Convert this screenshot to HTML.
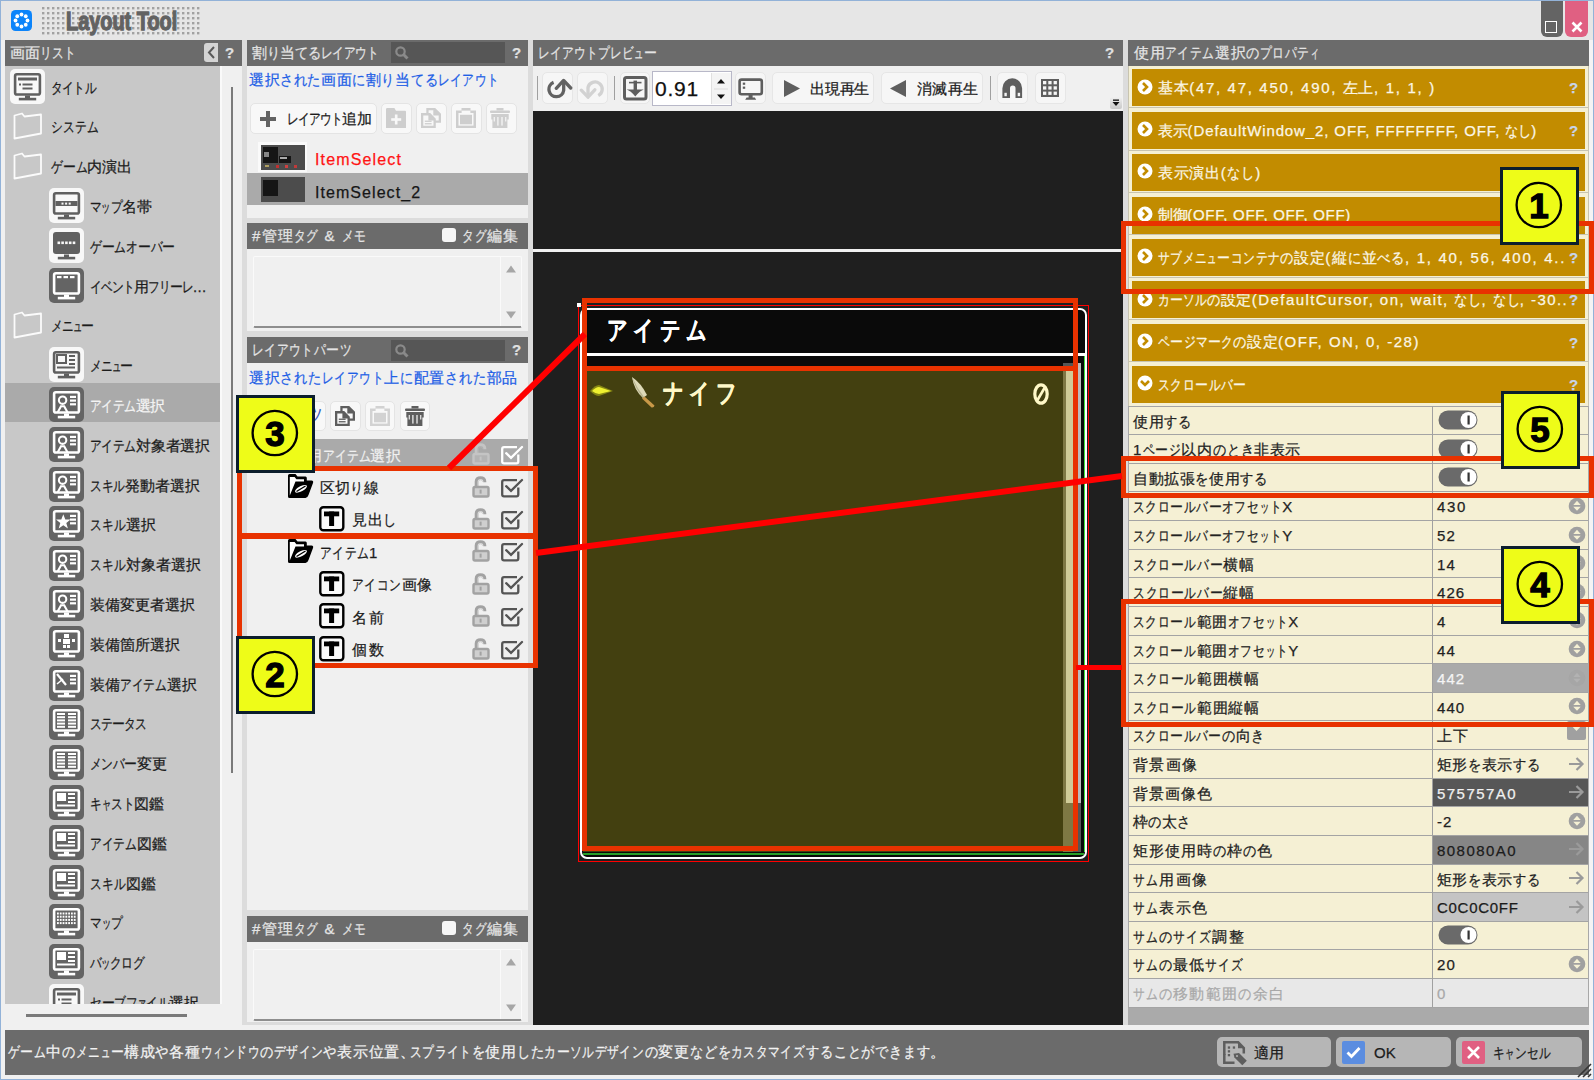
<!DOCTYPE html><html lang="ja"><head><meta charset="utf-8"><style>
html,body{margin:0;padding:0;} body{width:1594px;height:1080px;position:relative;overflow:hidden;background:#f0f0f0;font-family:'Liberation Sans', sans-serif;}
div{box-sizing:border-box;-webkit-text-stroke:0.25px currentColor;} svg{position:absolute;display:block;}
</style></head><body>
<div style="position:absolute;left:0px;top:0px;width:1594px;height:40px;background:#e6e6e6;"></div>
<div style="position:absolute;left:0px;top:0px;width:1594px;height:1px;background:#92b2d8;"></div>
<div style="position:absolute;left:0px;top:0px;width:1px;height:1080px;background:#92b2d8;"></div>
<div style="position:absolute;left:1593px;top:0px;width:1px;height:1080px;background:#92b2d8;"></div>
<div style="position:absolute;left:0px;top:1079px;width:1594px;height:1px;background:#92b2d8;"></div>
<svg style="left:11px;top:10px" width="21" height="21" viewBox="0 0 21 21"><rect x="0" y="0" width="21" height="21" rx="4.5" fill="#0c84fa"/><circle cx="16.5" cy="10.5" r="1.9" fill="#fff"/><circle cx="14.742641380355892" cy="14.742639993882566" r="1.9" fill="#fff"/><circle cx="10.50000196076938" cy="16.49999999999968" r="1.9" fill="#fff"/><circle cx="6.257361392591211" cy="14.74264276682876" r="1.9" fill="#fff"/><circle cx="4.500000000001282" cy="10.500003921538758" r="1.9" fill="#fff"/><circle cx="6.257355846698819" cy="6.257362779065442" r="1.9" fill="#fff"/><circle cx="10.499994117691864" cy="4.500000000002884" r="1.9" fill="#fff"/><circle cx="14.742635834459875" cy="6.257354460226856" r="1.9" fill="#fff"/></svg>
<svg style="left:42px;top:7.4px" width="160" height="30" viewBox="0 0 160 30"><rect x="0.0" y="0.0" width="2.4" height="2.4" fill="#a2a2a2"/><rect x="5.0" y="0.0" width="2.4" height="2.4" fill="#a2a2a2"/><rect x="10.0" y="0.0" width="2.4" height="2.4" fill="#a2a2a2"/><rect x="15.0" y="0.0" width="2.4" height="2.4" fill="#a2a2a2"/><rect x="20.0" y="0.0" width="2.4" height="2.4" fill="#a2a2a2"/><rect x="25.0" y="0.0" width="2.4" height="2.4" fill="#a2a2a2"/><rect x="30.0" y="0.0" width="2.4" height="2.4" fill="#a2a2a2"/><rect x="35.0" y="0.0" width="2.4" height="2.4" fill="#a2a2a2"/><rect x="40.0" y="0.0" width="2.4" height="2.4" fill="#a2a2a2"/><rect x="45.0" y="0.0" width="2.4" height="2.4" fill="#a2a2a2"/><rect x="50.0" y="0.0" width="2.4" height="2.4" fill="#a2a2a2"/><rect x="55.0" y="0.0" width="2.4" height="2.4" fill="#a2a2a2"/><rect x="60.0" y="0.0" width="2.4" height="2.4" fill="#a2a2a2"/><rect x="65.0" y="0.0" width="2.4" height="2.4" fill="#a2a2a2"/><rect x="70.0" y="0.0" width="2.4" height="2.4" fill="#a2a2a2"/><rect x="75.0" y="0.0" width="2.4" height="2.4" fill="#a2a2a2"/><rect x="80.0" y="0.0" width="2.4" height="2.4" fill="#a2a2a2"/><rect x="85.0" y="0.0" width="2.4" height="2.4" fill="#a2a2a2"/><rect x="90.0" y="0.0" width="2.4" height="2.4" fill="#a2a2a2"/><rect x="95.0" y="0.0" width="2.4" height="2.4" fill="#a2a2a2"/><rect x="100.0" y="0.0" width="2.4" height="2.4" fill="#a2a2a2"/><rect x="105.0" y="0.0" width="2.4" height="2.4" fill="#a2a2a2"/><rect x="110.0" y="0.0" width="2.4" height="2.4" fill="#a2a2a2"/><rect x="115.0" y="0.0" width="2.4" height="2.4" fill="#a2a2a2"/><rect x="120.0" y="0.0" width="2.4" height="2.4" fill="#a2a2a2"/><rect x="125.0" y="0.0" width="2.4" height="2.4" fill="#a2a2a2"/><rect x="130.0" y="0.0" width="2.4" height="2.4" fill="#a2a2a2"/><rect x="135.0" y="0.0" width="2.4" height="2.4" fill="#a2a2a2"/><rect x="140.0" y="0.0" width="2.4" height="2.4" fill="#a2a2a2"/><rect x="145.0" y="0.0" width="2.4" height="2.4" fill="#a2a2a2"/><rect x="150.0" y="0.0" width="2.4" height="2.4" fill="#a2a2a2"/><rect x="155.0" y="0.0" width="2.4" height="2.4" fill="#a2a2a2"/><rect x="0.0" y="5.0" width="2.4" height="2.4" fill="#a2a2a2"/><rect x="5.0" y="5.0" width="2.4" height="2.4" fill="#a2a2a2"/><rect x="10.0" y="5.0" width="2.4" height="2.4" fill="#a2a2a2"/><rect x="15.0" y="5.0" width="2.4" height="2.4" fill="#a2a2a2"/><rect x="20.0" y="5.0" width="2.4" height="2.4" fill="#a2a2a2"/><rect x="25.0" y="5.0" width="2.4" height="2.4" fill="#a2a2a2"/><rect x="30.0" y="5.0" width="2.4" height="2.4" fill="#a2a2a2"/><rect x="35.0" y="5.0" width="2.4" height="2.4" fill="#a2a2a2"/><rect x="40.0" y="5.0" width="2.4" height="2.4" fill="#a2a2a2"/><rect x="45.0" y="5.0" width="2.4" height="2.4" fill="#a2a2a2"/><rect x="50.0" y="5.0" width="2.4" height="2.4" fill="#a2a2a2"/><rect x="55.0" y="5.0" width="2.4" height="2.4" fill="#a2a2a2"/><rect x="60.0" y="5.0" width="2.4" height="2.4" fill="#a2a2a2"/><rect x="65.0" y="5.0" width="2.4" height="2.4" fill="#a2a2a2"/><rect x="70.0" y="5.0" width="2.4" height="2.4" fill="#a2a2a2"/><rect x="75.0" y="5.0" width="2.4" height="2.4" fill="#a2a2a2"/><rect x="80.0" y="5.0" width="2.4" height="2.4" fill="#a2a2a2"/><rect x="85.0" y="5.0" width="2.4" height="2.4" fill="#a2a2a2"/><rect x="90.0" y="5.0" width="2.4" height="2.4" fill="#a2a2a2"/><rect x="95.0" y="5.0" width="2.4" height="2.4" fill="#a2a2a2"/><rect x="100.0" y="5.0" width="2.4" height="2.4" fill="#a2a2a2"/><rect x="105.0" y="5.0" width="2.4" height="2.4" fill="#a2a2a2"/><rect x="110.0" y="5.0" width="2.4" height="2.4" fill="#a2a2a2"/><rect x="115.0" y="5.0" width="2.4" height="2.4" fill="#a2a2a2"/><rect x="120.0" y="5.0" width="2.4" height="2.4" fill="#a2a2a2"/><rect x="125.0" y="5.0" width="2.4" height="2.4" fill="#a2a2a2"/><rect x="130.0" y="5.0" width="2.4" height="2.4" fill="#a2a2a2"/><rect x="135.0" y="5.0" width="2.4" height="2.4" fill="#a2a2a2"/><rect x="140.0" y="5.0" width="2.4" height="2.4" fill="#a2a2a2"/><rect x="145.0" y="5.0" width="2.4" height="2.4" fill="#a2a2a2"/><rect x="150.0" y="5.0" width="2.4" height="2.4" fill="#a2a2a2"/><rect x="155.0" y="5.0" width="2.4" height="2.4" fill="#a2a2a2"/><rect x="0.0" y="10.0" width="2.4" height="2.4" fill="#a2a2a2"/><rect x="5.0" y="10.0" width="2.4" height="2.4" fill="#a2a2a2"/><rect x="10.0" y="10.0" width="2.4" height="2.4" fill="#a2a2a2"/><rect x="15.0" y="10.0" width="2.4" height="2.4" fill="#a2a2a2"/><rect x="20.0" y="10.0" width="2.4" height="2.4" fill="#a2a2a2"/><rect x="25.0" y="10.0" width="2.4" height="2.4" fill="#a2a2a2"/><rect x="30.0" y="10.0" width="2.4" height="2.4" fill="#a2a2a2"/><rect x="35.0" y="10.0" width="2.4" height="2.4" fill="#a2a2a2"/><rect x="40.0" y="10.0" width="2.4" height="2.4" fill="#a2a2a2"/><rect x="45.0" y="10.0" width="2.4" height="2.4" fill="#a2a2a2"/><rect x="50.0" y="10.0" width="2.4" height="2.4" fill="#a2a2a2"/><rect x="55.0" y="10.0" width="2.4" height="2.4" fill="#a2a2a2"/><rect x="60.0" y="10.0" width="2.4" height="2.4" fill="#a2a2a2"/><rect x="65.0" y="10.0" width="2.4" height="2.4" fill="#a2a2a2"/><rect x="70.0" y="10.0" width="2.4" height="2.4" fill="#a2a2a2"/><rect x="75.0" y="10.0" width="2.4" height="2.4" fill="#a2a2a2"/><rect x="80.0" y="10.0" width="2.4" height="2.4" fill="#a2a2a2"/><rect x="85.0" y="10.0" width="2.4" height="2.4" fill="#a2a2a2"/><rect x="90.0" y="10.0" width="2.4" height="2.4" fill="#a2a2a2"/><rect x="95.0" y="10.0" width="2.4" height="2.4" fill="#a2a2a2"/><rect x="100.0" y="10.0" width="2.4" height="2.4" fill="#a2a2a2"/><rect x="105.0" y="10.0" width="2.4" height="2.4" fill="#a2a2a2"/><rect x="110.0" y="10.0" width="2.4" height="2.4" fill="#a2a2a2"/><rect x="115.0" y="10.0" width="2.4" height="2.4" fill="#a2a2a2"/><rect x="120.0" y="10.0" width="2.4" height="2.4" fill="#a2a2a2"/><rect x="125.0" y="10.0" width="2.4" height="2.4" fill="#a2a2a2"/><rect x="130.0" y="10.0" width="2.4" height="2.4" fill="#a2a2a2"/><rect x="135.0" y="10.0" width="2.4" height="2.4" fill="#a2a2a2"/><rect x="140.0" y="10.0" width="2.4" height="2.4" fill="#a2a2a2"/><rect x="145.0" y="10.0" width="2.4" height="2.4" fill="#a2a2a2"/><rect x="150.0" y="10.0" width="2.4" height="2.4" fill="#a2a2a2"/><rect x="155.0" y="10.0" width="2.4" height="2.4" fill="#a2a2a2"/><rect x="0.0" y="15.0" width="2.4" height="2.4" fill="#a2a2a2"/><rect x="5.0" y="15.0" width="2.4" height="2.4" fill="#a2a2a2"/><rect x="10.0" y="15.0" width="2.4" height="2.4" fill="#a2a2a2"/><rect x="15.0" y="15.0" width="2.4" height="2.4" fill="#a2a2a2"/><rect x="20.0" y="15.0" width="2.4" height="2.4" fill="#a2a2a2"/><rect x="25.0" y="15.0" width="2.4" height="2.4" fill="#a2a2a2"/><rect x="30.0" y="15.0" width="2.4" height="2.4" fill="#a2a2a2"/><rect x="35.0" y="15.0" width="2.4" height="2.4" fill="#a2a2a2"/><rect x="40.0" y="15.0" width="2.4" height="2.4" fill="#a2a2a2"/><rect x="45.0" y="15.0" width="2.4" height="2.4" fill="#a2a2a2"/><rect x="50.0" y="15.0" width="2.4" height="2.4" fill="#a2a2a2"/><rect x="55.0" y="15.0" width="2.4" height="2.4" fill="#a2a2a2"/><rect x="60.0" y="15.0" width="2.4" height="2.4" fill="#a2a2a2"/><rect x="65.0" y="15.0" width="2.4" height="2.4" fill="#a2a2a2"/><rect x="70.0" y="15.0" width="2.4" height="2.4" fill="#a2a2a2"/><rect x="75.0" y="15.0" width="2.4" height="2.4" fill="#a2a2a2"/><rect x="80.0" y="15.0" width="2.4" height="2.4" fill="#a2a2a2"/><rect x="85.0" y="15.0" width="2.4" height="2.4" fill="#a2a2a2"/><rect x="90.0" y="15.0" width="2.4" height="2.4" fill="#a2a2a2"/><rect x="95.0" y="15.0" width="2.4" height="2.4" fill="#a2a2a2"/><rect x="100.0" y="15.0" width="2.4" height="2.4" fill="#a2a2a2"/><rect x="105.0" y="15.0" width="2.4" height="2.4" fill="#a2a2a2"/><rect x="110.0" y="15.0" width="2.4" height="2.4" fill="#a2a2a2"/><rect x="115.0" y="15.0" width="2.4" height="2.4" fill="#a2a2a2"/><rect x="120.0" y="15.0" width="2.4" height="2.4" fill="#a2a2a2"/><rect x="125.0" y="15.0" width="2.4" height="2.4" fill="#a2a2a2"/><rect x="130.0" y="15.0" width="2.4" height="2.4" fill="#a2a2a2"/><rect x="135.0" y="15.0" width="2.4" height="2.4" fill="#a2a2a2"/><rect x="140.0" y="15.0" width="2.4" height="2.4" fill="#a2a2a2"/><rect x="145.0" y="15.0" width="2.4" height="2.4" fill="#a2a2a2"/><rect x="150.0" y="15.0" width="2.4" height="2.4" fill="#a2a2a2"/><rect x="155.0" y="15.0" width="2.4" height="2.4" fill="#a2a2a2"/><rect x="0.0" y="20.0" width="2.4" height="2.4" fill="#a2a2a2"/><rect x="5.0" y="20.0" width="2.4" height="2.4" fill="#a2a2a2"/><rect x="10.0" y="20.0" width="2.4" height="2.4" fill="#a2a2a2"/><rect x="15.0" y="20.0" width="2.4" height="2.4" fill="#a2a2a2"/><rect x="20.0" y="20.0" width="2.4" height="2.4" fill="#a2a2a2"/><rect x="25.0" y="20.0" width="2.4" height="2.4" fill="#a2a2a2"/><rect x="30.0" y="20.0" width="2.4" height="2.4" fill="#a2a2a2"/><rect x="35.0" y="20.0" width="2.4" height="2.4" fill="#a2a2a2"/><rect x="40.0" y="20.0" width="2.4" height="2.4" fill="#a2a2a2"/><rect x="45.0" y="20.0" width="2.4" height="2.4" fill="#a2a2a2"/><rect x="50.0" y="20.0" width="2.4" height="2.4" fill="#a2a2a2"/><rect x="55.0" y="20.0" width="2.4" height="2.4" fill="#a2a2a2"/><rect x="60.0" y="20.0" width="2.4" height="2.4" fill="#a2a2a2"/><rect x="65.0" y="20.0" width="2.4" height="2.4" fill="#a2a2a2"/><rect x="70.0" y="20.0" width="2.4" height="2.4" fill="#a2a2a2"/><rect x="75.0" y="20.0" width="2.4" height="2.4" fill="#a2a2a2"/><rect x="80.0" y="20.0" width="2.4" height="2.4" fill="#a2a2a2"/><rect x="85.0" y="20.0" width="2.4" height="2.4" fill="#a2a2a2"/><rect x="90.0" y="20.0" width="2.4" height="2.4" fill="#a2a2a2"/><rect x="95.0" y="20.0" width="2.4" height="2.4" fill="#a2a2a2"/><rect x="100.0" y="20.0" width="2.4" height="2.4" fill="#a2a2a2"/><rect x="105.0" y="20.0" width="2.4" height="2.4" fill="#a2a2a2"/><rect x="110.0" y="20.0" width="2.4" height="2.4" fill="#a2a2a2"/><rect x="115.0" y="20.0" width="2.4" height="2.4" fill="#a2a2a2"/><rect x="120.0" y="20.0" width="2.4" height="2.4" fill="#a2a2a2"/><rect x="125.0" y="20.0" width="2.4" height="2.4" fill="#a2a2a2"/><rect x="130.0" y="20.0" width="2.4" height="2.4" fill="#a2a2a2"/><rect x="135.0" y="20.0" width="2.4" height="2.4" fill="#a2a2a2"/><rect x="140.0" y="20.0" width="2.4" height="2.4" fill="#a2a2a2"/><rect x="145.0" y="20.0" width="2.4" height="2.4" fill="#a2a2a2"/><rect x="150.0" y="20.0" width="2.4" height="2.4" fill="#a2a2a2"/><rect x="155.0" y="20.0" width="2.4" height="2.4" fill="#a2a2a2"/><rect x="0.0" y="25.0" width="2.4" height="2.4" fill="#a2a2a2"/><rect x="5.0" y="25.0" width="2.4" height="2.4" fill="#a2a2a2"/><rect x="10.0" y="25.0" width="2.4" height="2.4" fill="#a2a2a2"/><rect x="15.0" y="25.0" width="2.4" height="2.4" fill="#a2a2a2"/><rect x="20.0" y="25.0" width="2.4" height="2.4" fill="#a2a2a2"/><rect x="25.0" y="25.0" width="2.4" height="2.4" fill="#a2a2a2"/><rect x="30.0" y="25.0" width="2.4" height="2.4" fill="#a2a2a2"/><rect x="35.0" y="25.0" width="2.4" height="2.4" fill="#a2a2a2"/><rect x="40.0" y="25.0" width="2.4" height="2.4" fill="#a2a2a2"/><rect x="45.0" y="25.0" width="2.4" height="2.4" fill="#a2a2a2"/><rect x="50.0" y="25.0" width="2.4" height="2.4" fill="#a2a2a2"/><rect x="55.0" y="25.0" width="2.4" height="2.4" fill="#a2a2a2"/><rect x="60.0" y="25.0" width="2.4" height="2.4" fill="#a2a2a2"/><rect x="65.0" y="25.0" width="2.4" height="2.4" fill="#a2a2a2"/><rect x="70.0" y="25.0" width="2.4" height="2.4" fill="#a2a2a2"/><rect x="75.0" y="25.0" width="2.4" height="2.4" fill="#a2a2a2"/><rect x="80.0" y="25.0" width="2.4" height="2.4" fill="#a2a2a2"/><rect x="85.0" y="25.0" width="2.4" height="2.4" fill="#a2a2a2"/><rect x="90.0" y="25.0" width="2.4" height="2.4" fill="#a2a2a2"/><rect x="95.0" y="25.0" width="2.4" height="2.4" fill="#a2a2a2"/><rect x="100.0" y="25.0" width="2.4" height="2.4" fill="#a2a2a2"/><rect x="105.0" y="25.0" width="2.4" height="2.4" fill="#a2a2a2"/><rect x="110.0" y="25.0" width="2.4" height="2.4" fill="#a2a2a2"/><rect x="115.0" y="25.0" width="2.4" height="2.4" fill="#a2a2a2"/><rect x="120.0" y="25.0" width="2.4" height="2.4" fill="#a2a2a2"/><rect x="125.0" y="25.0" width="2.4" height="2.4" fill="#a2a2a2"/><rect x="130.0" y="25.0" width="2.4" height="2.4" fill="#a2a2a2"/><rect x="135.0" y="25.0" width="2.4" height="2.4" fill="#a2a2a2"/><rect x="140.0" y="25.0" width="2.4" height="2.4" fill="#a2a2a2"/><rect x="145.0" y="25.0" width="2.4" height="2.4" fill="#a2a2a2"/><rect x="150.0" y="25.0" width="2.4" height="2.4" fill="#a2a2a2"/><rect x="155.0" y="25.0" width="2.4" height="2.4" fill="#a2a2a2"/></svg>
<div style="position:absolute;left:66px;top:8px;font-family:'Liberation Sans',sans-serif;font-weight:bold;font-size:26px;line-height:26px;color:#626262;-webkit-text-stroke:1.3px #626262;transform:scaleX(0.765);transform-origin:0 0;letter-spacing:0px;">Layout Tool</div>
<div style="position:absolute;left:1541px;top:1px;width:22px;height:36px;background:#646464;border-radius:0 0 6px 6px;"></div>
<div style="position:absolute;left:1545px;top:21px;width:12px;height:12px;border:1.5px solid #fff;"></div>
<div style="position:absolute;left:1565px;top:1px;width:23px;height:36px;background:#e06082;border-radius:0 0 6px 6px;"></div>
<svg style="left:1571px;top:21px" width="12" height="12" viewBox="0 0 12 12"><path d="M1.5 1.5L10.5 10.5M10.5 1.5L1.5 10.5" stroke="#fff" stroke-width="2.6"/></svg>
<div style="position:absolute;left:5px;top:40px;width:237px;height:26px;background:#6b6b6b;"></div>
<div style="position:absolute;left:10px;top:45px;font-size:15px;line-height:15px;color:#e4e4e4;white-space:nowrap;"><span style="letter-spacing:0.18px">画面</span><span style="display:inline-block;transform:scaleX(0.780);transform-origin:0 0;letter-spacing:0.23px;margin-right:-10.05px">リスト</span></div>
<div style="position:absolute;left:204px;top:43px;width:14px;height:19px;background:#d4d4d4;border-radius:3px 0 0 3px;"></div>
<svg style="left:205px;top:45px" width="12" height="15" viewBox="0 0 12 15"><path d="M9 2L4 7.5L9 13" stroke="#5a5a5a" stroke-width="2" fill="none"/></svg>
<div style="position:absolute;left:225px;top:45px;font-size:15px;line-height:15px;color:#e0e0e0;white-space:nowrap;font-weight:bold;"><span style="letter-spacing:1.08px">?</span></div>
<div style="position:absolute;left:5px;top:66px;width:215px;height:938px;background:#c8c8c8;"></div>
<div style="position:absolute;left:220px;top:66px;width:2px;height:938px;background:#fafafa;"></div>
<div style="position:absolute;left:231px;top:87px;width:2px;height:686px;background:#7a7a7a;"></div>
<div style="position:absolute;left:26px;top:1014px;width:161px;height:3px;background:#7a7a7a;"></div>
<div style="position:absolute;left:5px;top:66px;width:215px;height:938px;overflow:hidden;">
<svg style="left:5px;top:2.5px" width="35" height="35" viewBox="0 0 35 35"><rect x="0" y="0" width="35" height="35" rx="5" fill="#f8f8f8"/><rect x="5.1" y="5.2" width="24.8" height="20.3" rx="1.8" fill="none" stroke="#606060" stroke-width="2.6"/><rect x="15" y="26.5" width="5" height="2.5" fill="#606060"/><rect x="8.8" y="28.8" width="17.4" height="2.6" fill="#606060"/><rect x="8" y="8.5" width="19" height="3" fill="#606060"/><rect x="9" y="14.5" width="2" height="2" fill="#606060"/><rect x="12.5" y="14.5" width="10" height="2" fill="#606060"/><rect x="12.5" y="18.5" width="10" height="2" fill="#606060"/></svg>
<div style="position:absolute;left:46px;top:13.5px;font-size:15px;line-height:15px;color:#1c1c1c;white-space:nowrap;"><span style="display:inline-block;transform:scaleX(0.780);transform-origin:0 0;letter-spacing:-0.58px;margin-right:-12.69px">タイトル</span></div>
<svg style="left:5px;top:42.3px" width="35" height="35" viewBox="0 0 35 35"><path d="M4.5 7.5L12 5.5L14.5 8.5L31 6.5V25.5L4.5 30.5Z" fill="none" stroke="#fbfbfb" stroke-width="1.8" stroke-linejoin="round"/></svg>
<div style="position:absolute;left:46px;top:53.3px;font-size:15px;line-height:15px;color:#1c1c1c;white-space:nowrap;"><span style="display:inline-block;transform:scaleX(0.780);transform-origin:0 0;letter-spacing:0.21px;margin-right:-13.39px">システム</span></div>
<svg style="left:5px;top:82.1px" width="35" height="35" viewBox="0 0 35 35"><path d="M4.5 7.5L12 5.5L14.5 8.5L31 6.5V25.5L4.5 30.5Z" fill="none" stroke="#fbfbfb" stroke-width="1.8" stroke-linejoin="round"/></svg>
<div style="position:absolute;left:46px;top:93.1px;font-size:15px;line-height:15px;color:#1c1c1c;white-space:nowrap;"><span style="display:inline-block;transform:scaleX(0.780);transform-origin:0 0;letter-spacing:0.03px;margin-right:-3.31px">ゲ</span><span style="display:inline-block;transform:scaleX(0.860);transform-origin:0 0;letter-spacing:0.03px;margin-right:-2.10px">ー</span><span style="display:inline-block;transform:scaleX(0.780);transform-origin:0 0;letter-spacing:0.03px;margin-right:-3.31px">ム</span><span style="letter-spacing:0.03px">内演出</span></div>
<svg style="left:43.5px;top:121.89999999999999px" width="35" height="35" viewBox="0 0 35 35"><rect x="0" y="0" width="35" height="35" rx="5" fill="#f8f8f8"/><rect x="5.1" y="5.2" width="24.8" height="20.3" rx="1.8" fill="none" stroke="#606060" stroke-width="2.6"/><rect x="15" y="26.5" width="5" height="2.5" fill="#606060"/><rect x="8.8" y="28.8" width="17.4" height="2.6" fill="#606060"/><rect x="6.5" y="13" width="22" height="5" fill="#606060"/><rect x="12.5" y="14.6" width="2" height="2" fill="#f8f8f8"/><rect x="16.1" y="14.6" width="2" height="2" fill="#f8f8f8"/><rect x="19.7" y="14.6" width="2" height="2" fill="#f8f8f8"/></svg>
<div style="position:absolute;left:85px;top:132.9px;font-size:15px;line-height:15px;color:#1c1c1c;white-space:nowrap;"><span style="display:inline-block;transform:scaleX(0.780);transform-origin:0 0;letter-spacing:-0.32px;margin-right:-3.23px">マ</span><span style="display:inline-block;transform:scaleX(0.620);transform-origin:0 0;letter-spacing:-0.40px;margin-right:-5.55px">ッ</span><span style="display:inline-block;transform:scaleX(0.780);transform-origin:0 0;letter-spacing:-0.32px;margin-right:-3.23px">プ</span><span style="letter-spacing:-0.25px">名帯</span></div>
<svg style="left:43.5px;top:161.7px" width="35" height="35" viewBox="0 0 35 35"><rect x="0" y="0" width="35" height="35" rx="5" fill="#f8f8f8"/><rect x="4" y="4" width="27" height="22" rx="3" fill="#606060"/><rect x="8.5" y="13.5" width="2.6" height="2.6" fill="#f8f8f8"/><rect x="12.3" y="13.5" width="2.6" height="2.6" fill="#f8f8f8"/><rect x="16.1" y="13.5" width="2.6" height="2.6" fill="#f8f8f8"/><rect x="19.9" y="13.5" width="2.6" height="2.6" fill="#f8f8f8"/><rect x="23.7" y="13.5" width="2.6" height="2.6" fill="#f8f8f8"/><rect x="15" y="26.5" width="5" height="2.5" fill="#606060"/><rect x="8.8" y="28.8" width="17.4" height="2.6" fill="#606060"/></svg>
<div style="position:absolute;left:85px;top:172.7px;font-size:15px;line-height:15px;color:#1c1c1c;white-space:nowrap;"><span style="display:inline-block;transform:scaleX(0.780);transform-origin:0 0;letter-spacing:-0.11px;margin-right:-3.28px">ゲ</span><span style="display:inline-block;transform:scaleX(0.860);transform-origin:0 0;letter-spacing:-0.10px;margin-right:-2.09px">ー</span><span style="display:inline-block;transform:scaleX(0.780);transform-origin:0 0;letter-spacing:-0.11px;margin-right:-6.55px">ムオ</span><span style="display:inline-block;transform:scaleX(0.860);transform-origin:0 0;letter-spacing:-0.10px;margin-right:-2.09px">ー</span><span style="display:inline-block;transform:scaleX(0.780);transform-origin:0 0;letter-spacing:-0.11px;margin-right:-3.28px">バ</span><span style="display:inline-block;transform:scaleX(0.860);transform-origin:0 0;letter-spacing:-0.10px;margin-right:-2.09px">ー</span></div>
<svg style="left:43.5px;top:201.5px" width="35" height="35" viewBox="0 0 35 35"><rect x="0" y="0" width="35" height="35" rx="5" fill="#646464"/><rect x="5.1" y="5.2" width="24.8" height="20.3" rx="1.8" fill="none" stroke="#ffffff" stroke-width="2.6"/><rect x="15" y="26.5" width="5" height="2.5" fill="#ffffff"/><rect x="8.8" y="28.8" width="17.4" height="2.6" fill="#ffffff"/><rect x="8.0" y="8" width="4.5" height="2.2" fill="#ffffff"/><rect x="14.5" y="8" width="4.5" height="2.2" fill="#ffffff"/><rect x="21.0" y="8" width="4.5" height="2.2" fill="#ffffff"/></svg>
<div style="position:absolute;left:85px;top:212.5px;font-size:15px;line-height:15px;color:#1c1c1c;white-space:nowrap;"><span style="display:inline-block;transform:scaleX(0.780);transform-origin:0 0;letter-spacing:-0.97px;margin-right:-12.34px">イベント</span><span style="letter-spacing:-0.76px">用</span><span style="display:inline-block;transform:scaleX(0.780);transform-origin:0 0;letter-spacing:-0.97px;margin-right:-6.17px">フリ</span><span style="display:inline-block;transform:scaleX(0.860);transform-origin:0 0;letter-spacing:-0.88px;margin-right:-1.98px">ー</span><span style="display:inline-block;transform:scaleX(0.780);transform-origin:0 0;letter-spacing:-0.97px;margin-right:-3.09px">レ</span><span style="letter-spacing:0.32px">...</span></div>
<svg style="left:5px;top:241.29999999999998px" width="35" height="35" viewBox="0 0 35 35"><path d="M4.5 7.5L12 5.5L14.5 8.5L31 6.5V25.5L4.5 30.5Z" fill="none" stroke="#fbfbfb" stroke-width="1.8" stroke-linejoin="round"/></svg>
<div style="position:absolute;left:46px;top:252.3px;font-size:15px;line-height:15px;color:#1c1c1c;white-space:nowrap;"><span style="display:inline-block;transform:scaleX(0.780);transform-origin:0 0;letter-spacing:-1.00px;margin-right:-6.16px">メニ</span><span style="display:inline-block;transform:scaleX(0.620);transform-origin:0 0;letter-spacing:-1.26px;margin-right:-5.22px">ュ</span><span style="display:inline-block;transform:scaleX(0.860);transform-origin:0 0;letter-spacing:-0.91px;margin-right:-1.97px">ー</span></div>
<svg style="left:43.5px;top:281.09999999999997px" width="35" height="35" viewBox="0 0 35 35"><rect x="0" y="0" width="35" height="35" rx="5" fill="#f8f8f8"/><rect x="5.1" y="5.2" width="24.8" height="20.3" rx="1.8" fill="none" stroke="#606060" stroke-width="2.6"/><rect x="15" y="26.5" width="5" height="2.5" fill="#606060"/><rect x="8.8" y="28.8" width="17.4" height="2.6" fill="#606060"/><rect x="8" y="8" width="9" height="8" fill="none" stroke="#606060" stroke-width="2"/><rect x="20" y="8" width="6" height="2" fill="#606060"/><rect x="20" y="12" width="6" height="2" fill="#606060"/><rect x="20" y="16" width="6" height="2" fill="#606060"/><rect x="8" y="19.5" width="18" height="2" fill="#606060"/></svg>
<div style="position:absolute;left:85px;top:292.1px;font-size:15px;line-height:15px;color:#1c1c1c;white-space:nowrap;"><span style="display:inline-block;transform:scaleX(0.780);transform-origin:0 0;letter-spacing:-1.00px;margin-right:-6.16px">メニ</span><span style="display:inline-block;transform:scaleX(0.620);transform-origin:0 0;letter-spacing:-1.26px;margin-right:-5.22px">ュ</span><span style="display:inline-block;transform:scaleX(0.860);transform-origin:0 0;letter-spacing:-0.91px;margin-right:-1.97px">ー</span></div>
<div style="position:absolute;left:0;top:317.4px;width:215px;height:39px;background:#aaaaaa;"></div>
<svg style="left:43.5px;top:320.9px" width="35" height="35" viewBox="0 0 35 35"><rect x="0" y="0" width="35" height="35" rx="5" fill="#646464"/><rect x="5.1" y="5.2" width="24.8" height="20.3" rx="1.8" fill="none" stroke="#ffffff" stroke-width="2.6"/><rect x="15" y="26.5" width="5" height="2.5" fill="#ffffff"/><rect x="8.8" y="28.8" width="17.4" height="2.6" fill="#ffffff"/><circle cx="13.6" cy="13.2" r="3.7" fill="none" stroke="#ffffff" stroke-width="2.1"/><path d="M8.6 25.5L12 19.2H15.2L18.6 25.5" fill="none" stroke="#ffffff" stroke-width="2.1"/><rect x="21" y="8.8" width="6" height="2.2" fill="#ffffff"/><rect x="21" y="12.5" width="6" height="2.2" fill="#ffffff"/><rect x="21" y="16.2" width="6" height="2.2" fill="#ffffff"/></svg>
<div style="position:absolute;left:85px;top:331.9px;font-size:15px;line-height:15px;color:#f4f4f4;white-space:nowrap;"><span style="display:inline-block;transform:scaleX(0.780);transform-origin:0 0;letter-spacing:-0.39px;margin-right:-12.86px">アイテム</span><span style="letter-spacing:-0.30px">選択</span></div>
<svg style="left:43.5px;top:360.7px" width="35" height="35" viewBox="0 0 35 35"><rect x="0" y="0" width="35" height="35" rx="5" fill="#646464"/><rect x="5.1" y="5.2" width="24.8" height="20.3" rx="1.8" fill="none" stroke="#ffffff" stroke-width="2.6"/><rect x="15" y="26.5" width="5" height="2.5" fill="#ffffff"/><rect x="8.8" y="28.8" width="17.4" height="2.6" fill="#ffffff"/><circle cx="13.6" cy="13.2" r="3.7" fill="none" stroke="#ffffff" stroke-width="2.1"/><path d="M8.6 25.5L12 19.2H15.2L18.6 25.5" fill="none" stroke="#ffffff" stroke-width="2.1"/><rect x="21" y="8.8" width="6" height="2.2" fill="#ffffff"/><rect x="21" y="12.5" width="6" height="2.2" fill="#ffffff"/><rect x="21" y="16.2" width="6" height="2.2" fill="#ffffff"/></svg>
<div style="position:absolute;left:85px;top:371.7px;font-size:15px;line-height:15px;color:#1c1c1c;white-space:nowrap;"><span style="display:inline-block;transform:scaleX(0.780);transform-origin:0 0;letter-spacing:-0.26px;margin-right:-12.97px">アイテム</span><span style="letter-spacing:-0.20px">対象者選択</span></div>
<svg style="left:43.5px;top:400.5px" width="35" height="35" viewBox="0 0 35 35"><rect x="0" y="0" width="35" height="35" rx="5" fill="#646464"/><rect x="5.1" y="5.2" width="24.8" height="20.3" rx="1.8" fill="none" stroke="#ffffff" stroke-width="2.6"/><rect x="15" y="26.5" width="5" height="2.5" fill="#ffffff"/><rect x="8.8" y="28.8" width="17.4" height="2.6" fill="#ffffff"/><circle cx="13.6" cy="13.2" r="3.7" fill="none" stroke="#ffffff" stroke-width="2.1"/><path d="M8.6 25.5L12 19.2H15.2L18.6 25.5" fill="none" stroke="#ffffff" stroke-width="2.1"/><rect x="21" y="8.8" width="6" height="2.2" fill="#ffffff"/><rect x="21" y="12.5" width="6" height="2.2" fill="#ffffff"/><rect x="21" y="16.2" width="6" height="2.2" fill="#ffffff"/></svg>
<div style="position:absolute;left:85px;top:411.5px;font-size:15px;line-height:15px;color:#1c1c1c;white-space:nowrap;"><span style="display:inline-block;transform:scaleX(0.780);transform-origin:0 0;letter-spacing:-0.02px;margin-right:-9.89px">スキル</span><span style="letter-spacing:-0.02px">発動者選択</span></div>
<svg style="left:43.5px;top:440.29999999999995px" width="35" height="35" viewBox="0 0 35 35"><rect x="0" y="0" width="35" height="35" rx="5" fill="#646464"/><rect x="5.1" y="5.2" width="24.8" height="20.3" rx="1.8" fill="none" stroke="#ffffff" stroke-width="2.6"/><rect x="15" y="26.5" width="5" height="2.5" fill="#ffffff"/><rect x="8.8" y="28.8" width="17.4" height="2.6" fill="#ffffff"/><path d="M14.3 8.2L16.3 13.6H21.6L17.3 16.9L18.9 22.6L14.3 19.2L9.7 22.6L11.3 16.9L7 13.6H12.3Z" fill="#ffffff"/><rect x="21" y="8.8" width="6" height="2.2" fill="#ffffff"/><rect x="21" y="12.5" width="6" height="2.2" fill="#ffffff"/><rect x="21" y="16.2" width="6" height="2.2" fill="#ffffff"/></svg>
<div style="position:absolute;left:85px;top:451.3px;font-size:15px;line-height:15px;color:#1c1c1c;white-space:nowrap;"><span style="display:inline-block;transform:scaleX(0.780);transform-origin:0 0;letter-spacing:0.35px;margin-right:-10.13px">スキル</span><span style="letter-spacing:0.28px">選択</span></div>
<svg style="left:43.5px;top:480.09999999999997px" width="35" height="35" viewBox="0 0 35 35"><rect x="0" y="0" width="35" height="35" rx="5" fill="#646464"/><rect x="5.1" y="5.2" width="24.8" height="20.3" rx="1.8" fill="none" stroke="#ffffff" stroke-width="2.6"/><rect x="15" y="26.5" width="5" height="2.5" fill="#ffffff"/><rect x="8.8" y="28.8" width="17.4" height="2.6" fill="#ffffff"/><circle cx="13.6" cy="13.2" r="3.7" fill="none" stroke="#ffffff" stroke-width="2.1"/><path d="M8.6 25.5L12 19.2H15.2L18.6 25.5" fill="none" stroke="#ffffff" stroke-width="2.1"/><rect x="21" y="8.8" width="6" height="2.2" fill="#ffffff"/><rect x="21" y="12.5" width="6" height="2.2" fill="#ffffff"/><rect x="21" y="16.2" width="6" height="2.2" fill="#ffffff"/></svg>
<div style="position:absolute;left:85px;top:491.1px;font-size:15px;line-height:15px;color:#1c1c1c;white-space:nowrap;"><span style="display:inline-block;transform:scaleX(0.780);transform-origin:0 0;letter-spacing:0.22px;margin-right:-10.04px">スキル</span><span style="letter-spacing:0.17px">対象者選択</span></div>
<svg style="left:43.5px;top:519.9px" width="35" height="35" viewBox="0 0 35 35"><rect x="0" y="0" width="35" height="35" rx="5" fill="#646464"/><rect x="5.1" y="5.2" width="24.8" height="20.3" rx="1.8" fill="none" stroke="#ffffff" stroke-width="2.6"/><rect x="15" y="26.5" width="5" height="2.5" fill="#ffffff"/><rect x="8.8" y="28.8" width="17.4" height="2.6" fill="#ffffff"/><circle cx="13.6" cy="13.2" r="3.7" fill="none" stroke="#ffffff" stroke-width="2.1"/><path d="M8.6 25.5L12 19.2H15.2L18.6 25.5" fill="none" stroke="#ffffff" stroke-width="2.1"/><rect x="21" y="8.8" width="6" height="2.2" fill="#ffffff"/><rect x="21" y="12.5" width="6" height="2.2" fill="#ffffff"/><rect x="21" y="16.2" width="6" height="2.2" fill="#ffffff"/></svg>
<div style="position:absolute;left:85px;top:530.9px;font-size:15px;line-height:15px;color:#1c1c1c;white-space:nowrap;">装備変更者選択</div>
<svg style="left:43.5px;top:559.6999999999999px" width="35" height="35" viewBox="0 0 35 35"><rect x="0" y="0" width="35" height="35" rx="5" fill="#646464"/><rect x="5.1" y="5.2" width="24.8" height="20.3" rx="1.8" fill="none" stroke="#ffffff" stroke-width="2.6"/><rect x="15" y="26.5" width="5" height="2.5" fill="#ffffff"/><rect x="8.8" y="28.8" width="17.4" height="2.6" fill="#ffffff"/><rect x="15" y="8" width="5" height="4" fill="#ffffff"/><rect x="14" y="13" width="7" height="5" fill="#ffffff"/><rect x="9" y="13" width="3" height="3" fill="#ffffff"/><rect x="23" y="13" width="3" height="3" fill="#ffffff"/><rect x="14" y="19" width="3" height="3" fill="#ffffff"/><rect x="18" y="19" width="3" height="3" fill="#ffffff"/></svg>
<div style="position:absolute;left:85px;top:570.7px;font-size:15px;line-height:15px;color:#1c1c1c;white-space:nowrap;">装備箇所選択</div>
<svg style="left:43.5px;top:599.5px" width="35" height="35" viewBox="0 0 35 35"><rect x="0" y="0" width="35" height="35" rx="5" fill="#646464"/><rect x="5.1" y="5.2" width="24.8" height="20.3" rx="1.8" fill="none" stroke="#ffffff" stroke-width="2.6"/><rect x="15" y="26.5" width="5" height="2.5" fill="#ffffff"/><rect x="8.8" y="28.8" width="17.4" height="2.6" fill="#ffffff"/><path d="M8 8L17 19" stroke="#ffffff" stroke-width="2.2"/><path d="M8 18L14 13" stroke="#ffffff" stroke-width="1.6"/><rect x="21" y="8.8" width="6" height="2.2" fill="#ffffff"/><rect x="21" y="12.5" width="6" height="2.2" fill="#ffffff"/><rect x="21" y="16.2" width="6" height="2.2" fill="#ffffff"/></svg>
<div style="position:absolute;left:85px;top:610.5px;font-size:15px;line-height:15px;color:#1c1c1c;white-space:nowrap;"><span style="letter-spacing:-0.04px">装備</span><span style="display:inline-block;transform:scaleX(0.780);transform-origin:0 0;letter-spacing:-0.05px;margin-right:-13.16px">アイテム</span><span style="letter-spacing:-0.04px">選択</span></div>
<svg style="left:43.5px;top:639.3px" width="35" height="35" viewBox="0 0 35 35"><rect x="0" y="0" width="35" height="35" rx="5" fill="#646464"/><rect x="5.1" y="5.2" width="24.8" height="20.3" rx="1.8" fill="none" stroke="#ffffff" stroke-width="2.6"/><rect x="15" y="26.5" width="5" height="2.5" fill="#ffffff"/><rect x="8.8" y="28.8" width="17.4" height="2.6" fill="#ffffff"/><rect x="8" y="8.0" width="8" height="2" fill="#ffffff"/><rect x="19" y="8.0" width="8" height="2" fill="#ffffff"/><rect x="8" y="11.2" width="8" height="2" fill="#ffffff"/><rect x="19" y="11.2" width="8" height="2" fill="#ffffff"/><rect x="8" y="14.4" width="8" height="2" fill="#ffffff"/><rect x="19" y="14.4" width="8" height="2" fill="#ffffff"/><rect x="8" y="17.6" width="8" height="2" fill="#ffffff"/><rect x="19" y="17.6" width="8" height="2" fill="#ffffff"/><rect x="8" y="20.8" width="8" height="2" fill="#ffffff"/><rect x="19" y="20.8" width="8" height="2" fill="#ffffff"/></svg>
<div style="position:absolute;left:85px;top:650.3px;font-size:15px;line-height:15px;color:#1c1c1c;white-space:nowrap;"><span style="display:inline-block;transform:scaleX(0.780);transform-origin:0 0;letter-spacing:-0.83px;margin-right:-6.24px">ステ</span><span style="display:inline-block;transform:scaleX(0.860);transform-origin:0 0;letter-spacing:-0.75px;margin-right:-1.99px">ー</span><span style="display:inline-block;transform:scaleX(0.780);transform-origin:0 0;letter-spacing:-0.83px;margin-right:-6.24px">タス</span></div>
<svg style="left:43.5px;top:679.0999999999999px" width="35" height="35" viewBox="0 0 35 35"><rect x="0" y="0" width="35" height="35" rx="5" fill="#646464"/><rect x="5.1" y="5.2" width="24.8" height="20.3" rx="1.8" fill="none" stroke="#ffffff" stroke-width="2.6"/><rect x="15" y="26.5" width="5" height="2.5" fill="#ffffff"/><rect x="8.8" y="28.8" width="17.4" height="2.6" fill="#ffffff"/><rect x="8" y="8.0" width="8" height="2" fill="#ffffff"/><rect x="19" y="8.0" width="8" height="2" fill="#ffffff"/><rect x="8" y="11.2" width="8" height="2" fill="#ffffff"/><rect x="19" y="11.2" width="8" height="2" fill="#ffffff"/><rect x="8" y="14.4" width="8" height="2" fill="#ffffff"/><rect x="19" y="14.4" width="8" height="2" fill="#ffffff"/><rect x="8" y="17.6" width="8" height="2" fill="#ffffff"/><rect x="19" y="17.6" width="8" height="2" fill="#ffffff"/><rect x="8" y="20.8" width="8" height="2" fill="#ffffff"/><rect x="19" y="20.8" width="8" height="2" fill="#ffffff"/></svg>
<div style="position:absolute;left:85px;top:690.1px;font-size:15px;line-height:15px;color:#1c1c1c;white-space:nowrap;"><span style="display:inline-block;transform:scaleX(0.780);transform-origin:0 0;letter-spacing:-0.33px;margin-right:-9.68px">メンバ</span><span style="display:inline-block;transform:scaleX(0.860);transform-origin:0 0;letter-spacing:-0.30px;margin-right:-2.06px">ー</span><span style="letter-spacing:-0.26px">変更</span></div>
<svg style="left:43.5px;top:718.9px" width="35" height="35" viewBox="0 0 35 35"><rect x="0" y="0" width="35" height="35" rx="5" fill="#646464"/><rect x="5.1" y="5.2" width="24.8" height="20.3" rx="1.8" fill="none" stroke="#ffffff" stroke-width="2.6"/><rect x="15" y="26.5" width="5" height="2.5" fill="#ffffff"/><rect x="8.8" y="28.8" width="17.4" height="2.6" fill="#ffffff"/><rect x="8" y="8" width="9" height="8" fill="#ffffff"/><rect x="19" y="8" width="7" height="2" fill="#ffffff"/><rect x="19" y="12" width="7" height="2" fill="#ffffff"/><rect x="19" y="16" width="7" height="2" fill="#ffffff"/><rect x="8" y="19.5" width="18" height="2" fill="#ffffff"/></svg>
<div style="position:absolute;left:85px;top:729.9px;font-size:15px;line-height:15px;color:#1c1c1c;white-space:nowrap;"><span style="display:inline-block;transform:scaleX(0.780);transform-origin:0 0;letter-spacing:-0.10px;margin-right:-3.28px">キ</span><span style="display:inline-block;transform:scaleX(0.620);transform-origin:0 0;letter-spacing:-0.12px;margin-right:-5.65px">ャ</span><span style="display:inline-block;transform:scaleX(0.780);transform-origin:0 0;letter-spacing:-0.10px;margin-right:-6.56px">スト</span><span style="letter-spacing:-0.08px">図鑑</span></div>
<svg style="left:43.5px;top:758.6999999999999px" width="35" height="35" viewBox="0 0 35 35"><rect x="0" y="0" width="35" height="35" rx="5" fill="#646464"/><rect x="5.1" y="5.2" width="24.8" height="20.3" rx="1.8" fill="none" stroke="#ffffff" stroke-width="2.6"/><rect x="15" y="26.5" width="5" height="2.5" fill="#ffffff"/><rect x="8.8" y="28.8" width="17.4" height="2.6" fill="#ffffff"/><rect x="8" y="8" width="9" height="8" fill="#ffffff"/><rect x="19" y="8" width="7" height="2" fill="#ffffff"/><rect x="19" y="12" width="7" height="2" fill="#ffffff"/><rect x="19" y="16" width="7" height="2" fill="#ffffff"/><rect x="8" y="19.5" width="18" height="2" fill="#ffffff"/></svg>
<div style="position:absolute;left:85px;top:769.7px;font-size:15px;line-height:15px;color:#1c1c1c;white-space:nowrap;"><span style="display:inline-block;transform:scaleX(0.780);transform-origin:0 0;letter-spacing:-0.07px;margin-right:-13.14px">アイテム</span><span style="letter-spacing:-0.06px">図鑑</span></div>
<svg style="left:43.5px;top:798.5px" width="35" height="35" viewBox="0 0 35 35"><rect x="0" y="0" width="35" height="35" rx="5" fill="#646464"/><rect x="5.1" y="5.2" width="24.8" height="20.3" rx="1.8" fill="none" stroke="#ffffff" stroke-width="2.6"/><rect x="15" y="26.5" width="5" height="2.5" fill="#ffffff"/><rect x="8.8" y="28.8" width="17.4" height="2.6" fill="#ffffff"/><rect x="8" y="8" width="9" height="8" fill="#ffffff"/><rect x="19" y="8" width="7" height="2" fill="#ffffff"/><rect x="19" y="12" width="7" height="2" fill="#ffffff"/><rect x="19" y="16" width="7" height="2" fill="#ffffff"/><rect x="8" y="19.5" width="18" height="2" fill="#ffffff"/></svg>
<div style="position:absolute;left:85px;top:809.5px;font-size:15px;line-height:15px;color:#1c1c1c;white-space:nowrap;"><span style="display:inline-block;transform:scaleX(0.780);transform-origin:0 0;letter-spacing:0.35px;margin-right:-10.13px">スキル</span><span style="letter-spacing:0.28px">図鑑</span></div>
<svg style="left:43.5px;top:838.3px" width="35" height="35" viewBox="0 0 35 35"><rect x="0" y="0" width="35" height="35" rx="5" fill="#646464"/><rect x="5.1" y="5.2" width="24.8" height="20.3" rx="1.8" fill="none" stroke="#ffffff" stroke-width="2.6"/><rect x="15" y="26.5" width="5" height="2.5" fill="#ffffff"/><rect x="8.8" y="28.8" width="17.4" height="2.6" fill="#ffffff"/><rect x="8.0" y="8.5" width="1.8" height="2" fill="#ffffff"/><rect x="10.8" y="8.5" width="1.8" height="2" fill="#ffffff"/><rect x="13.6" y="8.5" width="1.8" height="2" fill="#ffffff"/><rect x="16.4" y="8.5" width="1.8" height="2" fill="#ffffff"/><rect x="19.2" y="8.5" width="1.8" height="2" fill="#ffffff"/><rect x="22.0" y="8.5" width="1.8" height="2" fill="#ffffff"/><rect x="24.8" y="8.5" width="1.8" height="2" fill="#ffffff"/><rect x="8.0" y="11.7" width="1.8" height="2" fill="#ffffff"/><rect x="10.8" y="11.7" width="1.8" height="2" fill="#ffffff"/><rect x="13.6" y="11.7" width="1.8" height="2" fill="#ffffff"/><rect x="16.4" y="11.7" width="1.8" height="2" fill="#ffffff"/><rect x="19.2" y="11.7" width="1.8" height="2" fill="#ffffff"/><rect x="22.0" y="11.7" width="1.8" height="2" fill="#ffffff"/><rect x="24.8" y="11.7" width="1.8" height="2" fill="#ffffff"/><rect x="8.0" y="14.9" width="1.8" height="2" fill="#ffffff"/><rect x="10.8" y="14.9" width="1.8" height="2" fill="#ffffff"/><rect x="13.6" y="14.9" width="1.8" height="2" fill="#ffffff"/><rect x="16.4" y="14.9" width="1.8" height="2" fill="#ffffff"/><rect x="19.2" y="14.9" width="1.8" height="2" fill="#ffffff"/><rect x="22.0" y="14.9" width="1.8" height="2" fill="#ffffff"/><rect x="24.8" y="14.9" width="1.8" height="2" fill="#ffffff"/><rect x="8.0" y="18.1" width="1.8" height="2" fill="#ffffff"/><rect x="10.8" y="18.1" width="1.8" height="2" fill="#ffffff"/><rect x="13.6" y="18.1" width="1.8" height="2" fill="#ffffff"/><rect x="16.4" y="18.1" width="1.8" height="2" fill="#ffffff"/><rect x="19.2" y="18.1" width="1.8" height="2" fill="#ffffff"/><rect x="22.0" y="18.1" width="1.8" height="2" fill="#ffffff"/><rect x="24.8" y="18.1" width="1.8" height="2" fill="#ffffff"/></svg>
<div style="position:absolute;left:85px;top:849.3px;font-size:15px;line-height:15px;color:#1c1c1c;white-space:nowrap;"><span style="display:inline-block;transform:scaleX(0.780);transform-origin:0 0;letter-spacing:-0.11px;margin-right:-3.28px">マ</span><span style="display:inline-block;transform:scaleX(0.620);transform-origin:0 0;letter-spacing:-0.13px;margin-right:-5.65px">ッ</span><span style="display:inline-block;transform:scaleX(0.780);transform-origin:0 0;letter-spacing:-0.11px;margin-right:-3.28px">プ</span></div>
<svg style="left:43.5px;top:878.0999999999999px" width="35" height="35" viewBox="0 0 35 35"><rect x="0" y="0" width="35" height="35" rx="5" fill="#646464"/><rect x="5.1" y="5.2" width="24.8" height="20.3" rx="1.8" fill="none" stroke="#ffffff" stroke-width="2.6"/><rect x="15" y="26.5" width="5" height="2.5" fill="#ffffff"/><rect x="8.8" y="28.8" width="17.4" height="2.6" fill="#ffffff"/><rect x="8" y="8" width="9" height="8" fill="#ffffff"/><rect x="19" y="8" width="7" height="2" fill="#ffffff"/><rect x="19" y="12" width="7" height="2" fill="#ffffff"/><rect x="19" y="16" width="7" height="2" fill="#ffffff"/><rect x="8" y="19.5" width="18" height="2" fill="#ffffff"/></svg>
<div style="position:absolute;left:85px;top:889.1px;font-size:15px;line-height:15px;color:#1c1c1c;white-space:nowrap;"><span style="display:inline-block;transform:scaleX(0.780);transform-origin:0 0;letter-spacing:-0.55px;margin-right:-3.18px">バ</span><span style="display:inline-block;transform:scaleX(0.620);transform-origin:0 0;letter-spacing:-0.69px;margin-right:-5.44px">ッ</span><span style="display:inline-block;transform:scaleX(0.780);transform-origin:0 0;letter-spacing:-0.55px;margin-right:-9.54px">クログ</span></div>
<svg style="left:43.5px;top:917.9px" width="35" height="35" viewBox="0 0 35 35"><rect x="0" y="0" width="35" height="35" rx="5" fill="#f8f8f8"/><rect x="5.1" y="5.2" width="24.8" height="20.3" rx="1.8" fill="none" stroke="#606060" stroke-width="2.6"/><rect x="15" y="26.5" width="5" height="2.5" fill="#606060"/><rect x="8.8" y="28.8" width="17.4" height="2.6" fill="#606060"/><rect x="8" y="8.5" width="19" height="3" fill="#606060"/><rect x="9" y="14.5" width="2" height="2" fill="#606060"/><rect x="12.5" y="14.5" width="10" height="2" fill="#606060"/><rect x="12.5" y="18.5" width="10" height="2" fill="#606060"/></svg>
<div style="position:absolute;left:85px;top:928.9px;font-size:15px;line-height:15px;color:#1c1c1c;white-space:nowrap;"><span style="display:inline-block;transform:scaleX(0.780);transform-origin:0 0;letter-spacing:-0.25px;margin-right:-3.25px">セ</span><span style="display:inline-block;transform:scaleX(0.860);transform-origin:0 0;letter-spacing:-0.22px;margin-right:-2.07px">ー</span><span style="display:inline-block;transform:scaleX(0.780);transform-origin:0 0;letter-spacing:-0.25px;margin-right:-6.49px">ブフ</span><span style="display:inline-block;transform:scaleX(0.620);transform-origin:0 0;letter-spacing:-0.31px;margin-right:-5.58px">ァ</span><span style="display:inline-block;transform:scaleX(0.780);transform-origin:0 0;letter-spacing:-0.25px;margin-right:-6.49px">イル</span><span style="letter-spacing:-0.19px">選択</span></div>
</div>
<div style="position:absolute;left:242px;top:40px;width:5px;height:985px;background:#dcdcdc;"></div>
<div style="position:absolute;left:528px;top:40px;width:5px;height:985px;background:#dcdcdc;"></div>
<div style="position:absolute;left:247px;top:40px;width:281px;height:26px;background:#6b6b6b;"></div>
<div style="position:absolute;left:252px;top:45px;font-size:15px;line-height:15px;color:#e4e4e4;white-space:nowrap;"><span style="letter-spacing:-0.21px">割</span><span style="display:inline-block;transform:scaleX(0.880);transform-origin:0 0;letter-spacing:-0.24px;margin-right:-1.77px">り</span><span style="letter-spacing:-0.21px">当</span><span style="display:inline-block;transform:scaleX(0.880);transform-origin:0 0;letter-spacing:-0.24px;margin-right:-3.54px">てる</span><span style="display:inline-block;transform:scaleX(0.780);transform-origin:0 0;letter-spacing:-0.27px;margin-right:-16.20px">レイアウト</span></div>
<div style="position:absolute;left:391px;top:42px;width:114px;height:21px;background:#565656;"></div>
<svg style="left:394px;top:45px" width="16" height="16" viewBox="0 0 16 16"><circle cx="6.5" cy="6.5" r="4.2" fill="none" stroke="#8a8a8a" stroke-width="2.2"/><path d="M9.5 9.5L13.5 13.5" stroke="#8a8a8a" stroke-width="3"/></svg>
<div style="position:absolute;left:512px;top:45px;font-size:15px;line-height:15px;color:#e0e0e0;white-space:nowrap;font-weight:bold;"><span style="letter-spacing:1.08px">?</span></div>
<div style="position:absolute;left:249px;top:72px;font-size:15px;line-height:15px;color:#1f5fe6;white-space:nowrap;"><span style="letter-spacing:0.50px">選択</span><span style="display:inline-block;transform:scaleX(0.880);transform-origin:0 0;letter-spacing:0.57px;margin-right:-5.61px">された</span><span style="letter-spacing:0.50px">画面</span><span style="display:inline-block;transform:scaleX(0.880);transform-origin:0 0;letter-spacing:0.57px;margin-right:-1.87px">に</span><span style="letter-spacing:0.50px">割</span><span style="display:inline-block;transform:scaleX(0.880);transform-origin:0 0;letter-spacing:0.57px;margin-right:-1.87px">り</span><span style="letter-spacing:0.50px">当</span><span style="display:inline-block;transform:scaleX(0.880);transform-origin:0 0;letter-spacing:0.57px;margin-right:-3.74px">てる</span><span style="display:inline-block;transform:scaleX(0.780);transform-origin:0 0;letter-spacing:0.65px;margin-right:-17.21px">レイアウト</span></div>
<div style="position:absolute;left:250px;top:103px;width:127px;height:31px;background:#f8f8f8;border:1px solid #e4e4e4;border-radius:5px;"></div>
<svg style="left:259px;top:110px" width="18" height="18" viewBox="0 0 18 18"><rect x="7" y="1" width="4" height="16" fill="#636363"/><rect x="1" y="7" width="16" height="4" fill="#636363"/></svg>
<div style="position:absolute;left:287px;top:111px;font-size:15px;line-height:15px;color:#1c1c1c;white-space:nowrap;"><span style="display:inline-block;transform:scaleX(0.780);transform-origin:0 0;letter-spacing:-0.82px;margin-right:-15.59px">レイアウト</span><span style="letter-spacing:-0.64px">追加</span></div>
<div style="position:absolute;left:381px;top:103px;width:31px;height:31px;background:#f8f8f8;border:1px solid #e4e4e4;border-radius:5px;"></div>
<div style="position:absolute;left:416px;top:103px;width:31px;height:31px;background:#f8f8f8;border:1px solid #e4e4e4;border-radius:5px;"></div>
<div style="position:absolute;left:450.5px;top:103px;width:31px;height:31px;background:#f8f8f8;border:1px solid #e4e4e4;border-radius:5px;"></div>
<div style="position:absolute;left:485.5px;top:103px;width:31px;height:31px;background:#f8f8f8;border:1px solid #e4e4e4;border-radius:5px;"></div>
<svg style="left:386px;top:108px" width="20" height="20" viewBox="0 0 20 20"><path d="M0 1.2Q0 0 1.2 0H8.4L10 2.8H19Q20 2.8 20 3.8V20H0Z" fill="#cecece"/><rect x="8.9" y="6.5" width="2.6" height="10" fill="#f8f8f8"/><rect x="5.2" y="10.2" width="10" height="2.6" fill="#f8f8f8"/></svg>
<svg style="left:421px;top:108px" width="20" height="20" viewBox="0 0 20 20"><path d="M5.3 0H14.2L20 5.8V14.8H5.3Z" fill="#cecece"/><path d="M7.6 2.3H12.3V7.6H17.7V12.5H7.6Z" fill="#f8f8f8"/><path d="M0 5.1H9.2L14.8 10.7V20H0Z" fill="#cecece"/><path d="M2.3 7.4H7.4V12.5H12.5V17.7H2.3Z" fill="#f8f8f8"/><rect x="3.8" y="12.6" width="6.8" height="1.3" fill="#cecece"/><rect x="3.8" y="15.1" width="6.8" height="1.3" fill="#cecece"/></svg>
<svg style="left:455.5px;top:108px" width="20" height="20" viewBox="0 0 20 20"><path d="M0 2.6H5.5V0H14.5V2.6H20V20H0Z" fill="#cecece"/><rect x="2.5" y="5" width="15" height="12.6" fill="#f8f8f8"/><rect x="4" y="6.8" width="12" height="9.5" fill="#cecece"/><rect x="5.6" y="2.6" width="8.8" height="2.4" fill="#f8f8f8"/></svg>
<svg style="left:490px;top:108px" width="21" height="20" viewBox="0 0 21 20"><rect x="6.5" y="0" width="7" height="2.5" fill="#cecece"/><rect x="0" y="2.4" width="20" height="2.5" fill="#cecece" rx="1"/><path d="M1.3 6H18.7V11.4H17.4V20H2.4V11.4H1.3Z" fill="#cecece"/><rect x="3.7" y="9" width="1.1" height="4.5" fill="#f8f8f8"/><rect x="7.3" y="9" width="1.2" height="8.6" fill="#f8f8f8"/><rect x="11.4" y="9" width="1.2" height="8.6" fill="#f8f8f8"/><rect x="15.2" y="9" width="1.1" height="4.5" fill="#f8f8f8"/></svg>
<div style="position:absolute;left:258px;top:142px;width:49px;height:30px;background:#fafafa;"></div>
<div style="position:absolute;left:260.5px;top:144.5px;width:44.5px;height:25.5px;background:#4c4c4c;"></div>
<div style="position:absolute;left:263px;top:146.5px;width:15px;height:16.5px;background:#151515;"></div>
<div style="position:absolute;left:279px;top:156px;width:12px;height:7px;background:#151515;"></div>
<div style="position:absolute;left:264px;top:152px;width:5px;height:5px;background:#b8b8b8;opacity:0.7;"></div>
<div style="position:absolute;left:280px;top:157px;width:7px;height:2px;background:#d0d0d0;opacity:0.8;"></div>
<div style="position:absolute;left:276px;top:165px;width:3px;height:3px;background:#c03030;"></div>
<div style="position:absolute;left:285px;top:165px;width:3px;height:3px;background:#d04040;"></div>
<div style="position:absolute;left:294px;top:165px;width:3px;height:3px;background:#c03a3a;"></div>
<div style="position:absolute;left:265px;top:165px;width:4px;height:2px;background:#b0a060;"></div>
<div style="position:absolute;left:247px;top:173px;width:281px;height:32px;background:#aaaaaa;"></div>
<div style="position:absolute;left:260.5px;top:177px;width:44.5px;height:25px;background:#4c4c4c;"></div>
<div style="position:absolute;left:263px;top:179.5px;width:15px;height:16px;background:#151515;"></div>
<div style="position:absolute;left:315px;top:152px;font-size:16px;line-height:16px;color:#ff1414;white-space:nowrap;"><span style="letter-spacing:1.14px">ItemSelect</span></div>
<div style="position:absolute;left:315px;top:184.5px;font-size:16px;line-height:16px;color:#161616;white-space:nowrap;"><span style="letter-spacing:1.06px">ItemSelect_2</span></div>
<div style="position:absolute;left:247px;top:218px;width:281px;height:5px;background:#dcdcdc;"></div>
<div style="position:absolute;left:247px;top:223px;width:281px;height:26px;background:#6b6b6b;"></div>
<div style="position:absolute;left:252px;top:228px;font-size:15px;line-height:15px;color:#e4e4e4;white-space:nowrap;"><span style="letter-spacing:1.80px">#</span><span style="letter-spacing:0.72px">管理</span><span style="display:inline-block;transform:scaleX(0.780);transform-origin:0 0;letter-spacing:0.92px;margin-right:-7.00px">タグ</span><span style="letter-spacing:1.80px"> &amp; </span><span style="display:inline-block;transform:scaleX(0.780);transform-origin:0 0;letter-spacing:0.92px;margin-right:-7.00px">メモ</span></div>
<div style="position:absolute;left:442px;top:228px;width:14px;height:14px;background:#f6f6f6;border-radius:3px;"></div>
<div style="position:absolute;left:462px;top:228px;font-size:15px;line-height:15px;color:#e4e4e4;white-space:nowrap;"><span style="display:inline-block;transform:scaleX(0.780);transform-origin:0 0;letter-spacing:1.15px;margin-right:-7.10px">タグ</span><span style="letter-spacing:0.89px">編集</span></div>
<div style="position:absolute;left:253px;top:256px;width:269px;height:72px;background:#f0f0f0;border:1px solid #fafafa;border-bottom:2px solid #8e8e8e;border-radius:2px;"></div>
<div style="position:absolute;left:500px;top:257px;width:1px;height:69px;background:#fafafa;"></div>
<svg style="left:504px;top:264px" width="14" height="10" viewBox="0 0 14 10"><path d="M7 1.5L12 8.5H2Z" fill="#a6a6a6"/></svg>
<svg style="left:504px;top:310px" width="14" height="10" viewBox="0 0 14 10"><path d="M2 1.5H12L7 8.5Z" fill="#a6a6a6"/></svg>
<div style="position:absolute;left:247px;top:331px;width:281px;height:6px;background:#dcdcdc;"></div>
<div style="position:absolute;left:247px;top:337px;width:281px;height:26px;background:#6b6b6b;"></div>
<div style="position:absolute;left:252px;top:342px;font-size:15px;line-height:15px;color:#e4e4e4;white-space:nowrap;"><span style="display:inline-block;transform:scaleX(0.780);transform-origin:0 0;letter-spacing:0.82px;margin-right:-20.89px">レイアウトパ</span><span style="display:inline-block;transform:scaleX(0.860);transform-origin:0 0;letter-spacing:0.75px;margin-right:-2.20px">ー</span><span style="display:inline-block;transform:scaleX(0.780);transform-origin:0 0;letter-spacing:0.82px;margin-right:-3.48px">ツ</span></div>
<div style="position:absolute;left:391px;top:340px;width:114px;height:21px;background:#565656;"></div>
<svg style="left:394px;top:343px" width="16" height="16" viewBox="0 0 16 16"><circle cx="6.5" cy="6.5" r="4.2" fill="none" stroke="#8a8a8a" stroke-width="2.2"/><path d="M9.5 9.5L13.5 13.5" stroke="#8a8a8a" stroke-width="3"/></svg>
<div style="position:absolute;left:512px;top:342px;font-size:15px;line-height:15px;color:#e0e0e0;white-space:nowrap;font-weight:bold;"><span style="letter-spacing:1.08px">?</span></div>
<div style="position:absolute;left:249px;top:370px;font-size:15px;line-height:15px;color:#1f5fe6;white-space:nowrap;"><span style="letter-spacing:0.68px">選択</span><span style="display:inline-block;transform:scaleX(0.880);transform-origin:0 0;letter-spacing:0.77px;margin-right:-5.68px">された</span><span style="display:inline-block;transform:scaleX(0.780);transform-origin:0 0;letter-spacing:0.87px;margin-right:-17.46px">レイアウト</span><span style="letter-spacing:0.68px">上</span><span style="display:inline-block;transform:scaleX(0.880);transform-origin:0 0;letter-spacing:0.77px;margin-right:-1.89px">に</span><span style="letter-spacing:0.68px">配置</span><span style="display:inline-block;transform:scaleX(0.880);transform-origin:0 0;letter-spacing:0.77px;margin-right:-5.68px">された</span><span style="letter-spacing:0.68px">部品</span></div>
<div style="position:absolute;left:250px;top:401px;width:76px;height:30px;background:#f8f8f8;border:1px solid #e4e4e4;border-radius:5px;"></div>
<div style="position:absolute;left:309px;top:406px;font-size:17px;line-height:17px;color:#2850b8;white-space:nowrap;"><span style="display:inline-block;transform:scaleX(0.780);transform-origin:0 0;letter-spacing:0.00px;margin-right:-3.74px">ツ</span></div>
<div style="position:absolute;left:330px;top:401px;width:30.5px;height:30px;background:#f8f8f8;border:1px solid #e4e4e4;border-radius:5px;"></div>
<div style="position:absolute;left:364.5px;top:401px;width:30.5px;height:30px;background:#f8f8f8;border:1px solid #e4e4e4;border-radius:5px;"></div>
<div style="position:absolute;left:399.5px;top:401px;width:30.5px;height:30px;background:#f8f8f8;border:1px solid #e4e4e4;border-radius:5px;"></div>
<svg style="left:335px;top:406px" width="20" height="20" viewBox="0 0 20 20"><path d="M5.3 0H14.2L20 5.8V14.8H5.3Z" fill="#5e5e5e"/><path d="M7.6 2.3H12.3V7.6H17.7V12.5H7.6Z" fill="#f8f8f8"/><path d="M0 5.1H9.2L14.8 10.7V20H0Z" fill="#5e5e5e"/><path d="M2.3 7.4H7.4V12.5H12.5V17.7H2.3Z" fill="#f8f8f8"/><rect x="3.8" y="12.6" width="6.8" height="1.3" fill="#5e5e5e"/><rect x="3.8" y="15.1" width="6.8" height="1.3" fill="#5e5e5e"/></svg>
<svg style="left:370px;top:406px" width="20" height="20" viewBox="0 0 20 20"><path d="M0 2.6H5.5V0H14.5V2.6H20V20H0Z" fill="#d2d2d2"/><rect x="2.5" y="5" width="15" height="12.6" fill="#f8f8f8"/><rect x="4" y="6.8" width="12" height="9.5" fill="#d2d2d2"/><rect x="5.6" y="2.6" width="8.8" height="2.4" fill="#f8f8f8"/></svg>
<svg style="left:404.5px;top:406px" width="21" height="20" viewBox="0 0 21 20"><rect x="6.5" y="0" width="7" height="2.5" fill="#5e5e5e"/><rect x="0" y="2.4" width="20" height="2.5" fill="#5e5e5e" rx="1"/><path d="M1.3 6H18.7V11.4H17.4V20H2.4V11.4H1.3Z" fill="#5e5e5e"/><rect x="3.7" y="9" width="1.1" height="4.5" fill="#f8f8f8"/><rect x="7.3" y="9" width="1.2" height="8.6" fill="#f8f8f8"/><rect x="11.4" y="9" width="1.2" height="8.6" fill="#f8f8f8"/><rect x="15.2" y="9" width="1.1" height="4.5" fill="#f8f8f8"/></svg>
<div style="position:absolute;left:247px;top:439px;width:281px;height:28px;background:#aaaaaa;"></div>
<div style="position:absolute;left:292px;top:448px;font-size:15px;line-height:15px;color:#f0f0f0;white-space:nowrap;"><span style="letter-spacing:0.27px">使用</span><span style="display:inline-block;transform:scaleX(0.780);transform-origin:0 0;letter-spacing:0.35px;margin-right:-13.51px">アイテム</span><span style="letter-spacing:0.27px">選択</span></div>
<svg style="left:472px;top:443px" width="18" height="22" viewBox="0 0 18 22"><path d="M4.2 11V5.5Q4.2 1.7 8.5 1.7Q12.8 1.7 12.8 5.5V6.2" fill="none" stroke="#c4c4c4" stroke-width="3"/><path d="M6.3 11V5.8Q6.3 3.8 8.5 3.8Q10.7 3.8 10.7 5.8" fill="none" stroke="#b4b4b4" stroke-width="1"/><rect x="1.5" y="11" width="15" height="9.5" rx="1.5" fill="#b4b4b4" stroke="#c4c4c4" stroke-width="2.4"/><rect x="7.6" y="13.6" width="2" height="4" fill="#c4c4c4"/></svg>
<svg style="left:501px;top:445px" width="23" height="20" viewBox="0 0 23 20"><path d="M16 2.2H3Q1.2 2.2 1.2 4V16.6Q1.2 18.4 3 18.4H15.5Q17.3 18.4 17.3 16.6V9.5" fill="none" stroke="#ffffff" stroke-width="2.3"/><path d="M5.2 8.2L10 12.8L21 2" fill="none" stroke="#ffffff" stroke-width="2.3" stroke-linecap="round"/></svg>
<svg style="left:286px;top:473.3px" width="30" height="28" viewBox="0 0 30 28"><path d="M2 2.5Q2 1 3.5 1H9.5L11.5 3.5H19.5Q20.8 3.5 20.8 5V7.5H25.5Q27.8 7.5 27 10L22.5 22Q21.8 24.5 19.5 25H3.5Q2 25 2 23.5Z" fill="#000"/><path d="M3.8 4H8.6L10.4 6.2H18V8.6H9.5L3.8 22.5Z" fill="#fff"/><ellipse cx="15" cy="15.8" rx="6.6" ry="2.6" transform="rotate(-28 15 15.8)" fill="#fff"/><path d="M10.5 18.5L19.5 13" stroke="#000" stroke-width="1.4"/></svg>
<div style="position:absolute;left:320px;top:480.0px;font-size:15px;line-height:15px;color:#1c1c1c;white-space:nowrap;"><span style="letter-spacing:0.19px">区切</span><span style="display:inline-block;transform:scaleX(0.880);transform-origin:0 0;letter-spacing:0.22px;margin-right:-1.83px">り</span><span style="letter-spacing:0.19px">線</span></div>
<svg style="left:471.5px;top:475.5px" width="18" height="22" viewBox="0 0 18 22"><path d="M4.2 11V5.5Q4.2 1.7 8.5 1.7Q12.8 1.7 12.8 5.5V6.2" fill="none" stroke="#a2a2a2" stroke-width="3"/><path d="M6.3 11V5.8Q6.3 3.8 8.5 3.8Q10.7 3.8 10.7 5.8" fill="none" stroke="#cfcfcf" stroke-width="1"/><rect x="1.5" y="11" width="15" height="9.5" rx="1.5" fill="#cfcfcf" stroke="#a2a2a2" stroke-width="2.4"/><rect x="7.6" y="13.6" width="2" height="4" fill="#a2a2a2"/></svg>
<svg style="left:501px;top:477.5px" width="23" height="20" viewBox="0 0 23 20"><path d="M16 2.2H3Q1.2 2.2 1.2 4V16.6Q1.2 18.4 3 18.4H15.5Q17.3 18.4 17.3 16.6V9.5" fill="none" stroke="#555555" stroke-width="2.3"/><path d="M5.2 8.2L10 12.8L21 2" fill="none" stroke="#555555" stroke-width="2.3" stroke-linecap="round"/></svg>
<svg style="left:319px;top:506.09999999999997px" width="26" height="26" viewBox="0 0 26 26"><rect x="1.3" y="1.3" width="23" height="23" rx="3" fill="#fafafa" stroke="#000" stroke-width="2.4"/><rect x="5" y="5.5" width="15.2" height="4.8" fill="#000"/><rect x="10.1" y="5.5" width="5" height="14.5" fill="#000"/></svg>
<div style="position:absolute;left:352px;top:512.4px;font-size:15px;line-height:15px;color:#1c1c1c;white-space:nowrap;"><span style="letter-spacing:0.60px">見出</span><span style="display:inline-block;transform:scaleX(0.880);transform-origin:0 0;letter-spacing:0.68px;margin-right:-1.88px">し</span></div>
<svg style="left:471.5px;top:507.9px" width="18" height="22" viewBox="0 0 18 22"><path d="M4.2 11V5.5Q4.2 1.7 8.5 1.7Q12.8 1.7 12.8 5.5V6.2" fill="none" stroke="#a2a2a2" stroke-width="3"/><path d="M6.3 11V5.8Q6.3 3.8 8.5 3.8Q10.7 3.8 10.7 5.8" fill="none" stroke="#cfcfcf" stroke-width="1"/><rect x="1.5" y="11" width="15" height="9.5" rx="1.5" fill="#cfcfcf" stroke="#a2a2a2" stroke-width="2.4"/><rect x="7.6" y="13.6" width="2" height="4" fill="#a2a2a2"/></svg>
<svg style="left:501px;top:509.9px" width="23" height="20" viewBox="0 0 23 20"><path d="M16 2.2H3Q1.2 2.2 1.2 4V16.6Q1.2 18.4 3 18.4H15.5Q17.3 18.4 17.3 16.6V9.5" fill="none" stroke="#555555" stroke-width="2.3"/><path d="M5.2 8.2L10 12.8L21 2" fill="none" stroke="#555555" stroke-width="2.3" stroke-linecap="round"/></svg>
<svg style="left:286px;top:538.0999999999999px" width="30" height="28" viewBox="0 0 30 28"><path d="M2 2.5Q2 1 3.5 1H9.5L11.5 3.5H19.5Q20.8 3.5 20.8 5V7.5H25.5Q27.8 7.5 27 10L22.5 22Q21.8 24.5 19.5 25H3.5Q2 25 2 23.5Z" fill="#000"/><path d="M3.8 4H8.6L10.4 6.2H18V8.6H9.5L3.8 22.5Z" fill="#fff"/><ellipse cx="15" cy="15.8" rx="6.6" ry="2.6" transform="rotate(-28 15 15.8)" fill="#fff"/><path d="M10.5 18.5L19.5 13" stroke="#000" stroke-width="1.4"/></svg>
<div style="position:absolute;left:320px;top:544.8px;font-size:15px;line-height:15px;color:#1c1c1c;white-space:nowrap;"><span style="display:inline-block;transform:scaleX(0.780);transform-origin:0 0;letter-spacing:0.71px;margin-right:-13.82px">アイテム</span><span style="letter-spacing:1.63px">1</span></div>
<svg style="left:471.5px;top:540.3px" width="18" height="22" viewBox="0 0 18 22"><path d="M4.2 11V5.5Q4.2 1.7 8.5 1.7Q12.8 1.7 12.8 5.5V6.2" fill="none" stroke="#a2a2a2" stroke-width="3"/><path d="M6.3 11V5.8Q6.3 3.8 8.5 3.8Q10.7 3.8 10.7 5.8" fill="none" stroke="#cfcfcf" stroke-width="1"/><rect x="1.5" y="11" width="15" height="9.5" rx="1.5" fill="#cfcfcf" stroke="#a2a2a2" stroke-width="2.4"/><rect x="7.6" y="13.6" width="2" height="4" fill="#a2a2a2"/></svg>
<svg style="left:501px;top:542.3px" width="23" height="20" viewBox="0 0 23 20"><path d="M16 2.2H3Q1.2 2.2 1.2 4V16.6Q1.2 18.4 3 18.4H15.5Q17.3 18.4 17.3 16.6V9.5" fill="none" stroke="#555555" stroke-width="2.3"/><path d="M5.2 8.2L10 12.8L21 2" fill="none" stroke="#555555" stroke-width="2.3" stroke-linecap="round"/></svg>
<svg style="left:319px;top:570.9000000000001px" width="26" height="26" viewBox="0 0 26 26"><rect x="1.3" y="1.3" width="23" height="23" rx="3" fill="#fafafa" stroke="#000" stroke-width="2.4"/><rect x="5" y="5.5" width="15.2" height="4.8" fill="#000"/><rect x="10.1" y="5.5" width="5" height="14.5" fill="#000"/></svg>
<div style="position:absolute;left:352px;top:577.2px;font-size:15px;line-height:15px;color:#1c1c1c;white-space:nowrap;"><span style="display:inline-block;transform:scaleX(0.780);transform-origin:0 0;letter-spacing:0.89px;margin-right:-13.98px">アイコン</span><span style="letter-spacing:0.70px">画像</span></div>
<svg style="left:471.5px;top:572.7px" width="18" height="22" viewBox="0 0 18 22"><path d="M4.2 11V5.5Q4.2 1.7 8.5 1.7Q12.8 1.7 12.8 5.5V6.2" fill="none" stroke="#a2a2a2" stroke-width="3"/><path d="M6.3 11V5.8Q6.3 3.8 8.5 3.8Q10.7 3.8 10.7 5.8" fill="none" stroke="#cfcfcf" stroke-width="1"/><rect x="1.5" y="11" width="15" height="9.5" rx="1.5" fill="#cfcfcf" stroke="#a2a2a2" stroke-width="2.4"/><rect x="7.6" y="13.6" width="2" height="4" fill="#a2a2a2"/></svg>
<svg style="left:501px;top:574.7px" width="23" height="20" viewBox="0 0 23 20"><path d="M16 2.2H3Q1.2 2.2 1.2 4V16.6Q1.2 18.4 3 18.4H15.5Q17.3 18.4 17.3 16.6V9.5" fill="none" stroke="#555555" stroke-width="2.3"/><path d="M5.2 8.2L10 12.8L21 2" fill="none" stroke="#555555" stroke-width="2.3" stroke-linecap="round"/></svg>
<svg style="left:319px;top:603.3000000000001px" width="26" height="26" viewBox="0 0 26 26"><rect x="1.3" y="1.3" width="23" height="23" rx="3" fill="#fafafa" stroke="#000" stroke-width="2.4"/><rect x="5" y="5.5" width="15.2" height="4.8" fill="#000"/><rect x="10.1" y="5.5" width="5" height="14.5" fill="#000"/></svg>
<div style="position:absolute;left:352px;top:609.6px;font-size:15px;line-height:15px;color:#1c1c1c;white-space:nowrap;"><span style="letter-spacing:1.50px">名前</span></div>
<svg style="left:471.5px;top:605.1px" width="18" height="22" viewBox="0 0 18 22"><path d="M4.2 11V5.5Q4.2 1.7 8.5 1.7Q12.8 1.7 12.8 5.5V6.2" fill="none" stroke="#a2a2a2" stroke-width="3"/><path d="M6.3 11V5.8Q6.3 3.8 8.5 3.8Q10.7 3.8 10.7 5.8" fill="none" stroke="#cfcfcf" stroke-width="1"/><rect x="1.5" y="11" width="15" height="9.5" rx="1.5" fill="#cfcfcf" stroke="#a2a2a2" stroke-width="2.4"/><rect x="7.6" y="13.6" width="2" height="4" fill="#a2a2a2"/></svg>
<svg style="left:501px;top:607.1px" width="23" height="20" viewBox="0 0 23 20"><path d="M16 2.2H3Q1.2 2.2 1.2 4V16.6Q1.2 18.4 3 18.4H15.5Q17.3 18.4 17.3 16.6V9.5" fill="none" stroke="#555555" stroke-width="2.3"/><path d="M5.2 8.2L10 12.8L21 2" fill="none" stroke="#555555" stroke-width="2.3" stroke-linecap="round"/></svg>
<svg style="left:319px;top:635.7px" width="26" height="26" viewBox="0 0 26 26"><rect x="1.3" y="1.3" width="23" height="23" rx="3" fill="#fafafa" stroke="#000" stroke-width="2.4"/><rect x="5" y="5.5" width="15.2" height="4.8" fill="#000"/><rect x="10.1" y="5.5" width="5" height="14.5" fill="#000"/></svg>
<div style="position:absolute;left:352px;top:642.0px;font-size:15px;line-height:15px;color:#1c1c1c;white-space:nowrap;"><span style="letter-spacing:1.50px">個数</span></div>
<svg style="left:471.5px;top:637.5px" width="18" height="22" viewBox="0 0 18 22"><path d="M4.2 11V5.5Q4.2 1.7 8.5 1.7Q12.8 1.7 12.8 5.5V6.2" fill="none" stroke="#a2a2a2" stroke-width="3"/><path d="M6.3 11V5.8Q6.3 3.8 8.5 3.8Q10.7 3.8 10.7 5.8" fill="none" stroke="#cfcfcf" stroke-width="1"/><rect x="1.5" y="11" width="15" height="9.5" rx="1.5" fill="#cfcfcf" stroke="#a2a2a2" stroke-width="2.4"/><rect x="7.6" y="13.6" width="2" height="4" fill="#a2a2a2"/></svg>
<svg style="left:501px;top:639.5px" width="23" height="20" viewBox="0 0 23 20"><path d="M16 2.2H3Q1.2 2.2 1.2 4V16.6Q1.2 18.4 3 18.4H15.5Q17.3 18.4 17.3 16.6V9.5" fill="none" stroke="#555555" stroke-width="2.3"/><path d="M5.2 8.2L10 12.8L21 2" fill="none" stroke="#555555" stroke-width="2.3" stroke-linecap="round"/></svg>
<div style="position:absolute;left:247px;top:910px;width:281px;height:6px;background:#dcdcdc;"></div>
<div style="position:absolute;left:247px;top:916px;width:281px;height:26px;background:#6b6b6b;"></div>
<div style="position:absolute;left:252px;top:921px;font-size:15px;line-height:15px;color:#e4e4e4;white-space:nowrap;"><span style="letter-spacing:1.80px">#</span><span style="letter-spacing:0.72px">管理</span><span style="display:inline-block;transform:scaleX(0.780);transform-origin:0 0;letter-spacing:0.92px;margin-right:-7.00px">タグ</span><span style="letter-spacing:1.80px"> &amp; </span><span style="display:inline-block;transform:scaleX(0.780);transform-origin:0 0;letter-spacing:0.92px;margin-right:-7.00px">メモ</span></div>
<div style="position:absolute;left:442px;top:921px;width:14px;height:14px;background:#f6f6f6;border-radius:3px;"></div>
<div style="position:absolute;left:462px;top:921px;font-size:15px;line-height:15px;color:#e4e4e4;white-space:nowrap;"><span style="display:inline-block;transform:scaleX(0.780);transform-origin:0 0;letter-spacing:1.15px;margin-right:-7.10px">タグ</span><span style="letter-spacing:0.89px">編集</span></div>
<div style="position:absolute;left:253px;top:949px;width:269px;height:72px;background:#f0f0f0;border:1px solid #fafafa;border-bottom:2px solid #8e8e8e;border-radius:2px;"></div>
<div style="position:absolute;left:500px;top:950px;width:1px;height:69px;background:#fafafa;"></div>
<svg style="left:504px;top:957px" width="14" height="10" viewBox="0 0 14 10"><path d="M7 1.5L12 8.5H2Z" fill="#a6a6a6"/></svg>
<svg style="left:504px;top:1003px" width="14" height="10" viewBox="0 0 14 10"><path d="M2 1.5H12L7 8.5Z" fill="#a6a6a6"/></svg>
<div style="position:absolute;left:247px;top:1022px;width:281px;height:3px;background:#dcdcdc;"></div>
<div style="position:absolute;left:533px;top:40px;width:590px;height:26px;background:#6b6b6b;"></div>
<div style="position:absolute;left:538px;top:45px;font-size:15px;line-height:15px;color:#e4e4e4;white-space:nowrap;"><span style="display:inline-block;transform:scaleX(0.780);transform-origin:0 0;letter-spacing:0.41px;margin-right:-27.12px">レイアウトプレビ</span><span style="display:inline-block;transform:scaleX(0.620);transform-origin:0 0;letter-spacing:0.51px;margin-right:-5.89px">ュ</span><span style="display:inline-block;transform:scaleX(0.860);transform-origin:0 0;letter-spacing:0.37px;margin-right:-2.15px">ー</span></div>
<div style="position:absolute;left:1105px;top:45px;font-size:15px;line-height:15px;color:#e0e0e0;white-space:nowrap;font-weight:bold;"><span style="letter-spacing:1.08px">?</span></div>
<div style="position:absolute;left:533px;top:66px;width:590px;height:45px;background:#f0f0f0;"></div>
<div style="position:absolute;left:537px;top:76px;width:1px;height:24px;background:#a0a0a0;"></div>
<div style="position:absolute;left:614px;top:76px;width:1px;height:24px;background:#a0a0a0;"></div>
<div style="position:absolute;left:990px;top:76px;width:1px;height:24px;background:#a0a0a0;"></div>
<div style="position:absolute;left:542px;top:72px;width:31px;height:32px;background:#f6f6f6;border:1px solid #e6e6e6;border-radius:5px;"></div>
<div style="position:absolute;left:577px;top:72px;width:31px;height:32px;background:#f6f6f6;border:1px solid #e6e6e6;border-radius:5px;"></div>
<svg style="left:547px;top:77px" width="26" height="24" viewBox="0 0 26 24"><path d="M6.6 5.4A7.4 7.4 0 1 0 16.7 13.2V4.5" fill="none" stroke="#626262" stroke-width="3.3"/><path d="M9.3 11.3L16.6 3.4L23.7 11" fill="none" stroke="#626262" stroke-width="3.3" stroke-linecap="round" stroke-linejoin="round"/></svg>
<svg style="left:579px;top:77px" width="26" height="24" viewBox="0 0 26 24"><path d="M19.3 18.6A7.2 7.2 0 1 0 9 10.5V19" fill="none" stroke="#d2d2d2" stroke-width="3.3"/><path d="M2.3 13.2L9 20.2L15.8 12.8" fill="none" stroke="#d2d2d2" stroke-width="3.3" stroke-linecap="round" stroke-linejoin="round"/></svg>
<div style="position:absolute;left:620px;top:72px;width:30px;height:32px;background:#f6f6f6;border:1px solid #e6e6e6;border-radius:5px;"></div>
<svg style="left:623px;top:76px" width="25" height="25" viewBox="0 0 25 25"><rect x="1.5" y="1.5" width="21.5" height="21.5" rx="2" fill="none" stroke="#5e5e5e" stroke-width="3"/><rect x="6" y="5.8" width="12.5" height="1.6" fill="#5e5e5e"/><rect x="10.5" y="4.6" width="3.5" height="2" fill="#5e5e5e"/><rect x="10.6" y="6" width="3.4" height="8" fill="#5e5e5e"/><path d="M3.6 13.6H20.8Q17 14.8 12.3 20.6Q7.6 14.8 3.6 13.6Z" fill="#5e5e5e"/></svg>
<div style="position:absolute;left:652px;top:71px;width:80px;height:35px;background:#ffffff;border:1px solid #b8b8c8;"></div>
<div style="position:absolute;left:655px;top:78px;font-size:21px;line-height:21px;color:#111;white-space:nowrap;"><span style="letter-spacing:0.78px">0.91</span></div>
<div style="position:absolute;left:711px;top:73px;width:20px;height:31px;background:#f4f4f4;border-left:1px solid #e0e0e0;"></div>
<svg style="left:713px;top:76px" width="16" height="26" viewBox="0 0 16 26"><path d="M8 3L12 7.5H4Z" fill="#111"/><path d="M4 18.5H12L8 23Z" fill="#111"/><rect x="1" y="12.5" width="14" height="1" fill="#dcdcdc"/></svg>
<div style="position:absolute;left:735px;top:72px;width:31px;height:32px;background:#f6f6f6;border:1px solid #e6e6e6;border-radius:5px;"></div>
<svg style="left:738px;top:78px" width="26" height="23" viewBox="0 0 26 23"><rect x="1.6" y="1.6" width="22.2" height="14.6" rx="2" fill="none" stroke="#5e5e5e" stroke-width="2.6"/><rect x="4.8" y="4.6" width="2.4" height="2.2" fill="#5e5e5e"/><rect x="4.8" y="8.6" width="2.4" height="2.2" fill="#5e5e5e"/><path d="M10.6 17H14.6V19.5H16.8L18.2 21.7H7.2L8.6 19.5H10.6Z" fill="#5e5e5e"/></svg>
<div style="position:absolute;left:772px;top:72px;width:102px;height:32px;background:#f6f6f6;border:1px solid #e6e6e6;border-radius:5px;"></div>
<svg style="left:783px;top:79px" width="18" height="19" viewBox="0 0 18 19"><path d="M1 1L17 9.5L1 18Z" fill="#5e5e5e"/></svg>
<div style="position:absolute;left:810px;top:81px;font-size:15px;line-height:15px;color:#1c1c1c;white-space:nowrap;"><span style="letter-spacing:-0.25px">出現再生</span></div>
<div style="position:absolute;left:881px;top:72px;width:102px;height:32px;background:#f6f6f6;border:1px solid #e6e6e6;border-radius:5px;"></div>
<svg style="left:889px;top:79px" width="18" height="19" viewBox="0 0 18 19"><path d="M17 1L1 9.5L17 18Z" fill="#5e5e5e"/></svg>
<div style="position:absolute;left:917px;top:81px;font-size:15px;line-height:15px;color:#1c1c1c;white-space:nowrap;"><span style="letter-spacing:0.25px">消滅再生</span></div>
<div style="position:absolute;left:997px;top:72px;width:31px;height:32px;background:#f6f6f6;border:1px solid #e6e6e6;border-radius:5px;"></div>
<svg style="left:1001px;top:78px" width="23" height="21" viewBox="0 0 23 21"><path d="M1.4 20V10.2A9.85 9.85 0 0 1 21.1 10.2V20H14.5V10.2A2.75 2.75 0 0 0 9 10.2V20Z" fill="#5e5e5e"/><rect x="3.4" y="14.8" width="2.4" height="3.4" fill="#f6f6f6"/><rect x="16.7" y="14.8" width="2.4" height="3.4" fill="#f6f6f6"/></svg>
<div style="position:absolute;left:1035px;top:72px;width:31px;height:32px;background:#f6f6f6;border:1px solid #e6e6e6;border-radius:5px;"></div>
<svg style="left:1041px;top:79px" width="18" height="18" viewBox="0 0 18 18"><rect x="0" y="0" width="18" height="18" fill="#5e5e5e"/><rect x="2.0" y="2.0" width="3.3" height="3.3" fill="#f6f6f6"/><rect x="7.3" y="2.0" width="3.3" height="3.3" fill="#f6f6f6"/><rect x="12.6" y="2.0" width="3.3" height="3.3" fill="#f6f6f6"/><rect x="2.0" y="7.3" width="3.3" height="3.3" fill="#f6f6f6"/><rect x="7.3" y="7.3" width="3.3" height="3.3" fill="#f6f6f6"/><rect x="12.6" y="7.3" width="3.3" height="3.3" fill="#f6f6f6"/><rect x="2.0" y="12.6" width="3.3" height="3.3" fill="#f6f6f6"/><rect x="7.3" y="12.6" width="3.3" height="3.3" fill="#f6f6f6"/><rect x="12.6" y="12.6" width="3.3" height="3.3" fill="#f6f6f6"/></svg>
<div style="position:absolute;left:1110px;top:97px;width:12px;height:12px;background:linear-gradient(#f0f0f0,#c8c8c8);border-radius:2px;"></div>
<svg style="left:1111px;top:98px" width="10" height="10" viewBox="0 0 10 10"><rect x="2" y="1.5" width="6" height="1.3" fill="#111"/><path d="M1.5 4H8.5L5 8Z" fill="#111"/></svg>
<div style="position:absolute;left:533px;top:111px;width:590px;height:914px;background:#1f1f1f;"></div>
<div style="position:absolute;left:533px;top:249px;width:590px;height:3px;background:#f0f0f0;"></div>
<div style="position:absolute;left:578px;top:305px;width:511px;height:557px;border:1px solid #ff0000;"></div>
<div style="position:absolute;left:577px;top:303px;width:4px;height:4px;background:#ffffff;"></div>
<div style="position:absolute;left:580px;top:308px;width:507px;height:551px;background:#0a0a0a;border:2px solid #ffffff;border-radius:7px;"></div>
<div style="position:absolute;left:582px;top:353px;width:503px;height:3px;background:#ffffff;"></div>
<div style="position:absolute;left:583px;top:370px;width:481px;height:482px;background:#434010;"></div>
<div style="position:absolute;left:1063px;top:363px;width:18px;height:489px;background:#555555;"></div>
<div style="position:absolute;left:1063px;top:370px;width:3px;height:482px;background:#7e7844;"></div>
<div style="position:absolute;left:1066px;top:370px;width:7px;height:433px;background:#d0cc98;"></div>
<div style="position:absolute;left:1066px;top:803px;width:7px;height:49px;background:#7e7844;"></div>
<div style="position:absolute;left:1078px;top:363px;width:3px;height:440px;background:#bcbcbc;"></div>
<div style="position:absolute;left:1084px;top:356px;width:1px;height:496px;background:#40e040;"></div>
<div style="position:absolute;left:583px;top:853px;width:501px;height:2px;background:#28a028;"></div>
<svg style="left:587px;top:381px" width="28" height="20" viewBox="0 0 28 20"><path d="M3 10Q8 4 12 4L26 10L12 15Q8 15 3 10Z" fill="#c8cc18" opacity="0.5"/><path d="M5 10Q9 6 12 6L24 10L12 13Q9 13 5 10Z" fill="#eef030"/></svg>
<svg style="left:629px;top:376px" width="28" height="33" viewBox="0 0 28 33"><path d="M3 1Q12 7 18 19L14 22Q5 14 3 1Z" fill="#dedab8"/><path d="M3 1Q6 12 14 22L15 21Q8 12 3 1Z" fill="#b8b490"/><path d="M15.5 20.5L25.5 29.5Q25 32 22.5 31.5L13 22.5Z" fill="#c89848"/></svg>
<div style="position:absolute;left:663px;top:380px;font-size:26px;line-height:26px;color:#fff8c8;white-space:nowrap;font-weight:bold;"><span style="display:inline-block;transform:scaleX(0.780);transform-origin:0 0;letter-spacing:6.90px;margin-right:-21.72px">ナイフ</span></div>
<svg style="left:1032px;top:382px" width="18" height="24" viewBox="0 0 18 24"><ellipse cx="9" cy="12" rx="6.2" ry="9.2" fill="none" stroke="#fff8c8" stroke-width="3.2"/><path d="M12.5 6L5.5 18" stroke="#fff8c8" stroke-width="2.6"/></svg>
<div style="position:absolute;left:607px;top:317px;font-size:26px;line-height:26px;color:#ffffff;white-space:nowrap;font-weight:bold;"><span style="display:inline-block;transform:scaleX(0.780);transform-origin:0 0;letter-spacing:6.69px;margin-right:-28.77px">アイテム</span></div>
<div style="position:absolute;left:1123px;top:40px;width:5px;height:985px;background:#dcdcdc;"></div>
<div style="position:absolute;left:1589px;top:40px;width:4px;height:1039px;background:#f4f4f4;"></div>
<div style="position:absolute;left:1128px;top:40px;width:461px;height:26px;background:#6b6b6b;"></div>
<div style="position:absolute;left:1134px;top:45px;font-size:15px;line-height:15px;color:#e4e4e4;white-space:nowrap;"><span style="letter-spacing:0.70px">使用</span><span style="display:inline-block;transform:scaleX(0.780);transform-origin:0 0;letter-spacing:0.90px;margin-right:-13.99px">アイテム</span><span style="letter-spacing:0.70px">選択</span><span style="display:inline-block;transform:scaleX(0.880);transform-origin:0 0;letter-spacing:0.80px;margin-right:-1.90px">の</span><span style="display:inline-block;transform:scaleX(0.780);transform-origin:0 0;letter-spacing:0.90px;margin-right:-13.99px">プロパテ</span><span style="display:inline-block;transform:scaleX(0.620);transform-origin:0 0;letter-spacing:1.14px;margin-right:-6.13px">ィ</span></div>
<div style="position:absolute;left:1128px;top:66px;width:461px;height:959px;background:#aaaaaa;"></div>
<div style="position:absolute;left:1128px;top:66px;width:461px;height:340px;background:#f5f0d4;"></div>
<div style="position:absolute;left:1132px;top:69.4px;width:453px;height:37px;background:#c28c00;"></div>
<svg style="left:1137px;top:78.7px" width="16" height="16" viewBox="0 0 16 16"><circle cx="8" cy="8" r="7.5" fill="#ffffff"/><path d="M6 4L10 8L6 12" fill="none" stroke="#c28c00" stroke-width="2.6"/></svg>
<div style="position:absolute;left:1158px;top:80.2px;font-size:15px;line-height:15px;color:#fbf6e6;white-space:nowrap;"><span style="letter-spacing:0.60px">基本</span><span style="letter-spacing:1.68px">(47, 47, 450, 490, </span><span style="letter-spacing:0.60px">左上</span><span style="letter-spacing:1.68px">, 1, 1, )</span></div>
<div style="position:absolute;left:1569px;top:80.4px;font-size:15px;line-height:15px;color:#c8d4e8;white-space:nowrap;font-weight:bold;"><span style="letter-spacing:1.08px">?</span></div>
<div style="position:absolute;left:1129px;top:107.27000000000001px;width:459px;height:1px;background:#c8c4b0;"></div>
<div style="position:absolute;left:1132px;top:111.77000000000001px;width:453px;height:37px;background:#c28c00;"></div>
<svg style="left:1137px;top:121.1px" width="16" height="16" viewBox="0 0 16 16"><circle cx="8" cy="8" r="7.5" fill="#ffffff"/><path d="M6 4L10 8L6 12" fill="none" stroke="#c28c00" stroke-width="2.6"/></svg>
<div style="position:absolute;left:1158px;top:122.57000000000001px;font-size:15px;line-height:15px;color:#fbf6e6;white-space:nowrap;"><span style="letter-spacing:-0.20px">表示</span><span style="letter-spacing:0.88px">(DefaultWindow_2, OFF, FFFFFFFF, OFF, </span><span style="display:inline-block;transform:scaleX(0.880);transform-origin:0 0;letter-spacing:-0.23px;margin-right:-3.55px">なし</span><span style="letter-spacing:0.88px">)</span></div>
<div style="position:absolute;left:1569px;top:122.77000000000001px;font-size:15px;line-height:15px;color:#c8d4e8;white-space:nowrap;font-weight:bold;"><span style="letter-spacing:1.08px">?</span></div>
<div style="position:absolute;left:1129px;top:149.64px;width:459px;height:1px;background:#c8c4b0;"></div>
<div style="position:absolute;left:1132px;top:154.14px;width:453px;height:37px;background:#c28c00;"></div>
<svg style="left:1137px;top:163.4px" width="16" height="16" viewBox="0 0 16 16"><circle cx="8" cy="8" r="7.5" fill="#ffffff"/><path d="M6 4L10 8L6 12" fill="none" stroke="#c28c00" stroke-width="2.6"/></svg>
<div style="position:absolute;left:1158px;top:164.94px;font-size:15px;line-height:15px;color:#fbf6e6;white-space:nowrap;"><span style="letter-spacing:0.67px">表示演出</span><span style="letter-spacing:1.75px">(</span><span style="display:inline-block;transform:scaleX(0.880);transform-origin:0 0;letter-spacing:0.76px;margin-right:-3.78px">なし</span><span style="letter-spacing:1.75px">)</span></div>
<div style="position:absolute;left:1569px;top:165.14px;font-size:15px;line-height:15px;color:#c8d4e8;white-space:nowrap;font-weight:bold;"><span style="letter-spacing:1.08px">?</span></div>
<div style="position:absolute;left:1129px;top:192.01px;width:459px;height:1px;background:#c8c4b0;"></div>
<div style="position:absolute;left:1132px;top:196.51px;width:453px;height:37px;background:#c28c00;"></div>
<svg style="left:1137px;top:205.8px" width="16" height="16" viewBox="0 0 16 16"><circle cx="8" cy="8" r="7.5" fill="#ffffff"/><path d="M6 4L10 8L6 12" fill="none" stroke="#c28c00" stroke-width="2.6"/></svg>
<div style="position:absolute;left:1158px;top:207.31px;font-size:15px;line-height:15px;color:#fbf6e6;white-space:nowrap;"><span style="letter-spacing:-0.39px">制御</span><span style="letter-spacing:0.69px">(OFF, OFF, OFF, OFF)</span></div>
<div style="position:absolute;left:1569px;top:207.51px;font-size:15px;line-height:15px;color:#c8d4e8;white-space:nowrap;font-weight:bold;"><span style="letter-spacing:1.08px">?</span></div>
<div style="position:absolute;left:1129px;top:234.38px;width:459px;height:1px;background:#c8c4b0;"></div>
<div style="position:absolute;left:1132px;top:238.88px;width:453px;height:37px;background:#c28c00;"></div>
<svg style="left:1137px;top:248.2px" width="16" height="16" viewBox="0 0 16 16"><circle cx="8" cy="8" r="7.5" fill="#ffffff"/><path d="M6 4L10 8L6 12" fill="none" stroke="#c28c00" stroke-width="2.6"/></svg>
<div style="position:absolute;left:1158px;top:249.68px;font-size:15px;line-height:15px;color:#fbf6e6;white-space:nowrap;"><span style="display:inline-block;transform:scaleX(0.780);transform-origin:0 0;letter-spacing:0.81px;margin-right:-13.92px">サブメニ</span><span style="display:inline-block;transform:scaleX(0.620);transform-origin:0 0;letter-spacing:1.03px;margin-right:-6.09px">ュ</span><span style="display:inline-block;transform:scaleX(0.860);transform-origin:0 0;letter-spacing:0.74px;margin-right:-2.20px">ー</span><span style="display:inline-block;transform:scaleX(0.780);transform-origin:0 0;letter-spacing:0.81px;margin-right:-13.92px">コンテナ</span><span style="display:inline-block;transform:scaleX(0.880);transform-origin:0 0;letter-spacing:0.72px;margin-right:-1.89px">の</span><span style="letter-spacing:0.64px">設定</span><span style="letter-spacing:1.72px">(</span><span style="letter-spacing:0.64px">縦</span><span style="display:inline-block;transform:scaleX(0.880);transform-origin:0 0;letter-spacing:0.72px;margin-right:-1.89px">に</span><span style="letter-spacing:0.64px">並</span><span style="display:inline-block;transform:scaleX(0.880);transform-origin:0 0;letter-spacing:0.72px;margin-right:-3.77px">べる</span><span style="letter-spacing:1.72px">, 1, 40, 56, 400, 4..</span></div>
<div style="position:absolute;left:1569px;top:249.88px;font-size:15px;line-height:15px;color:#c8d4e8;white-space:nowrap;font-weight:bold;"><span style="letter-spacing:1.08px">?</span></div>
<div style="position:absolute;left:1129px;top:276.75px;width:459px;height:1px;background:#c8c4b0;"></div>
<div style="position:absolute;left:1132px;top:281.25px;width:453px;height:37px;background:#c28c00;"></div>
<svg style="left:1137px;top:290.6px" width="16" height="16" viewBox="0 0 16 16"><circle cx="8" cy="8" r="7.5" fill="#ffffff"/><path d="M6 4L10 8L6 12" fill="none" stroke="#c28c00" stroke-width="2.6"/></svg>
<div style="position:absolute;left:1158px;top:292.05px;font-size:15px;line-height:15px;color:#fbf6e6;white-space:nowrap;"><span style="display:inline-block;transform:scaleX(0.780);transform-origin:0 0;letter-spacing:0.46px;margin-right:-3.40px">カ</span><span style="display:inline-block;transform:scaleX(0.860);transform-origin:0 0;letter-spacing:0.42px;margin-right:-2.16px">ー</span><span style="display:inline-block;transform:scaleX(0.780);transform-origin:0 0;letter-spacing:0.46px;margin-right:-6.80px">ソル</span><span style="display:inline-block;transform:scaleX(0.880);transform-origin:0 0;letter-spacing:0.41px;margin-right:-1.85px">の</span><span style="letter-spacing:0.36px">設定</span><span style="letter-spacing:1.44px">(DefaultCursor, on, wait, </span><span style="display:inline-block;transform:scaleX(0.880);transform-origin:0 0;letter-spacing:0.41px;margin-right:-3.70px">なし</span><span style="letter-spacing:1.44px">, </span><span style="display:inline-block;transform:scaleX(0.880);transform-origin:0 0;letter-spacing:0.41px;margin-right:-3.70px">なし</span><span style="letter-spacing:1.44px">, -30..</span></div>
<div style="position:absolute;left:1569px;top:292.25px;font-size:15px;line-height:15px;color:#c8d4e8;white-space:nowrap;font-weight:bold;"><span style="letter-spacing:1.08px">?</span></div>
<div style="position:absolute;left:1129px;top:319.12px;width:459px;height:1px;background:#c8c4b0;"></div>
<div style="position:absolute;left:1132px;top:323.62px;width:453px;height:37px;background:#c28c00;"></div>
<svg style="left:1137px;top:332.9px" width="16" height="16" viewBox="0 0 16 16"><circle cx="8" cy="8" r="7.5" fill="#ffffff"/><path d="M6 4L10 8L6 12" fill="none" stroke="#c28c00" stroke-width="2.6"/></svg>
<div style="position:absolute;left:1158px;top:334.42px;font-size:15px;line-height:15px;color:#fbf6e6;white-space:nowrap;"><span style="display:inline-block;transform:scaleX(0.780);transform-origin:0 0;letter-spacing:0.58px;margin-right:-3.43px">ペ</span><span style="display:inline-block;transform:scaleX(0.860);transform-origin:0 0;letter-spacing:0.53px;margin-right:-2.17px">ー</span><span style="display:inline-block;transform:scaleX(0.780);transform-origin:0 0;letter-spacing:0.58px;margin-right:-6.86px">ジマ</span><span style="display:inline-block;transform:scaleX(0.860);transform-origin:0 0;letter-spacing:0.53px;margin-right:-2.17px">ー</span><span style="display:inline-block;transform:scaleX(0.780);transform-origin:0 0;letter-spacing:0.58px;margin-right:-3.43px">ク</span><span style="display:inline-block;transform:scaleX(0.880);transform-origin:0 0;letter-spacing:0.52px;margin-right:-1.86px">の</span><span style="letter-spacing:0.46px">設定</span><span style="letter-spacing:1.54px">(OFF, ON, 0, -28)</span></div>
<div style="position:absolute;left:1569px;top:334.62px;font-size:15px;line-height:15px;color:#c8d4e8;white-space:nowrap;font-weight:bold;"><span style="letter-spacing:1.08px">?</span></div>
<div style="position:absolute;left:1129px;top:361.49px;width:459px;height:1px;background:#c8c4b0;"></div>
<div style="position:absolute;left:1132px;top:365.99px;width:453px;height:37px;background:#c28c00;"></div>
<svg style="left:1137px;top:375.3px" width="16" height="16" viewBox="0 0 16 16"><circle cx="8" cy="8" r="7.5" fill="#ffffff"/><path d="M4 6L8 10L12 6" fill="none" stroke="#c28c00" stroke-width="2.6"/></svg>
<div style="position:absolute;left:1158px;top:376.79px;font-size:15px;line-height:15px;color:#fbf6e6;white-space:nowrap;"><span style="display:inline-block;transform:scaleX(0.780);transform-origin:0 0;letter-spacing:0.85px;margin-right:-10.46px">スクロ</span><span style="display:inline-block;transform:scaleX(0.860);transform-origin:0 0;letter-spacing:0.77px;margin-right:-2.21px">ー</span><span style="display:inline-block;transform:scaleX(0.780);transform-origin:0 0;letter-spacing:0.85px;margin-right:-6.98px">ルバ</span><span style="display:inline-block;transform:scaleX(0.860);transform-origin:0 0;letter-spacing:0.77px;margin-right:-2.21px">ー</span></div>
<div style="position:absolute;left:1569px;top:376.99px;font-size:15px;line-height:15px;color:#c8d4e8;white-space:nowrap;font-weight:bold;"><span style="letter-spacing:1.08px">?</span></div>
<div style="position:absolute;left:1128px;top:66px;width:1px;height:340px;background:#c8c4b0;"></div>
<div style="position:absolute;left:1588px;top:66px;width:1px;height:340px;background:#c8c4b0;"></div>
<div style="position:absolute;left:1128px;top:406px;width:461px;height:28px;background:#f5f0d4;"></div>
<div style="position:absolute;left:1433px;top:406px;width:156px;height:28px;background:#f5f0d4;"></div>
<div style="position:absolute;left:1128px;top:406px;width:461px;height:1px;background:#a4a4a4;"></div>
<div style="position:absolute;left:1133px;top:413.6px;font-size:15px;line-height:15px;color:#222;white-space:nowrap;"><span style="letter-spacing:0.64px">使用</span><span style="display:inline-block;transform:scaleX(0.880);transform-origin:0 0;letter-spacing:0.73px;margin-right:-3.78px">する</span></div>
<svg style="left:1438px;top:410.1px" width="40" height="20" viewBox="0 0 40 20"><rect x="0.5" y="0.5" width="39" height="19" rx="9.5" fill="#6a6a6a"/><circle cx="30.5" cy="10" r="8" fill="#fff"/><rect x="29.5" y="5.5" width="2.2" height="9" fill="#333"/></svg>
<div style="position:absolute;left:1128px;top:434px;width:461px;height:29px;background:#f5f0d4;"></div>
<div style="position:absolute;left:1433px;top:434px;width:156px;height:29px;background:#f5f0d4;"></div>
<div style="position:absolute;left:1128px;top:434px;width:461px;height:1px;background:#a4a4a4;"></div>
<div style="position:absolute;left:1133px;top:442.22px;font-size:15px;line-height:15px;color:#222;white-space:nowrap;"><span style="letter-spacing:1.71px">1</span><span style="display:inline-block;transform:scaleX(0.780);transform-origin:0 0;letter-spacing:0.81px;margin-right:-3.48px">ペ</span><span style="display:inline-block;transform:scaleX(0.860);transform-origin:0 0;letter-spacing:0.74px;margin-right:-2.20px">ー</span><span style="display:inline-block;transform:scaleX(0.780);transform-origin:0 0;letter-spacing:0.81px;margin-right:-3.48px">ジ</span><span style="letter-spacing:0.63px">以内</span><span style="display:inline-block;transform:scaleX(0.880);transform-origin:0 0;letter-spacing:0.72px;margin-right:-5.66px">のとき</span><span style="letter-spacing:0.63px">非表示</span></div>
<svg style="left:1438px;top:438.7px" width="40" height="20" viewBox="0 0 40 20"><rect x="0.5" y="0.5" width="39" height="19" rx="9.5" fill="#6a6a6a"/><circle cx="30.5" cy="10" r="8" fill="#fff"/><rect x="29.5" y="5.5" width="2.2" height="9" fill="#333"/></svg>
<div style="position:absolute;left:1128px;top:463px;width:461px;height:28px;background:#f5f0d4;"></div>
<div style="position:absolute;left:1433px;top:463px;width:156px;height:28px;background:#f5f0d4;"></div>
<div style="position:absolute;left:1128px;top:463px;width:461px;height:1px;background:#a4a4a4;"></div>
<div style="position:absolute;left:1133px;top:470.84000000000003px;font-size:15px;line-height:15px;color:#222;white-space:nowrap;"><span style="letter-spacing:0.60px">自動拡張</span><span style="display:inline-block;transform:scaleX(0.880);transform-origin:0 0;letter-spacing:0.68px;margin-right:-1.88px">を</span><span style="letter-spacing:0.60px">使用</span><span style="display:inline-block;transform:scaleX(0.880);transform-origin:0 0;letter-spacing:0.68px;margin-right:-3.76px">する</span></div>
<svg style="left:1438px;top:467.3px" width="40" height="20" viewBox="0 0 40 20"><rect x="0.5" y="0.5" width="39" height="19" rx="9.5" fill="#6a6a6a"/><circle cx="30.5" cy="10" r="8" fill="#fff"/><rect x="29.5" y="5.5" width="2.2" height="9" fill="#333"/></svg>
<div style="position:absolute;left:1128px;top:491px;width:461px;height:29px;background:#f5f0d4;"></div>
<div style="position:absolute;left:1433px;top:491px;width:156px;height:29px;background:#f5f0d4;"></div>
<div style="position:absolute;left:1128px;top:491px;width:461px;height:1px;background:#a4a4a4;"></div>
<div style="position:absolute;left:1133px;top:499.46000000000004px;font-size:15px;line-height:15px;color:#222;white-space:nowrap;"><span style="display:inline-block;transform:scaleX(0.780);transform-origin:0 0;letter-spacing:0.93px;margin-right:-10.51px">スクロ</span><span style="display:inline-block;transform:scaleX(0.860);transform-origin:0 0;letter-spacing:0.84px;margin-right:-2.22px">ー</span><span style="display:inline-block;transform:scaleX(0.780);transform-origin:0 0;letter-spacing:0.93px;margin-right:-7.01px">ルバ</span><span style="display:inline-block;transform:scaleX(0.860);transform-origin:0 0;letter-spacing:0.84px;margin-right:-2.22px">ー</span><span style="display:inline-block;transform:scaleX(0.780);transform-origin:0 0;letter-spacing:0.93px;margin-right:-10.51px">オフセ</span><span style="display:inline-block;transform:scaleX(0.620);transform-origin:0 0;letter-spacing:1.17px;margin-right:-6.14px">ッ</span><span style="display:inline-block;transform:scaleX(0.780);transform-origin:0 0;letter-spacing:0.93px;margin-right:-3.50px">ト</span><span style="letter-spacing:1.80px">X</span></div>
<div style="position:absolute;left:1437px;top:499.46000000000004px;font-size:15px;line-height:15px;color:#222;white-space:nowrap;"><span style="letter-spacing:1.65px">430</span></div>
<svg style="left:1567.6px;top:497.0px" width="18" height="18" viewBox="0 0 18 18"><circle cx="9" cy="9" r="8.3" fill="#a0a0a0"/><path d="M5.3 7.9L9 3.8L12.7 7.9Z" fill="#f5f0d4"/><path d="M5.3 9.8L9 13.8L12.7 9.8Z" fill="#f5f0d4"/></svg>
<div style="position:absolute;left:1128px;top:520px;width:461px;height:29px;background:#f5f0d4;"></div>
<div style="position:absolute;left:1433px;top:520px;width:156px;height:29px;background:#f5f0d4;"></div>
<div style="position:absolute;left:1128px;top:520px;width:461px;height:1px;background:#a4a4a4;"></div>
<div style="position:absolute;left:1133px;top:528.08px;font-size:15px;line-height:15px;color:#222;white-space:nowrap;"><span style="display:inline-block;transform:scaleX(0.780);transform-origin:0 0;letter-spacing:0.93px;margin-right:-10.51px">スクロ</span><span style="display:inline-block;transform:scaleX(0.860);transform-origin:0 0;letter-spacing:0.84px;margin-right:-2.22px">ー</span><span style="display:inline-block;transform:scaleX(0.780);transform-origin:0 0;letter-spacing:0.93px;margin-right:-7.01px">ルバ</span><span style="display:inline-block;transform:scaleX(0.860);transform-origin:0 0;letter-spacing:0.84px;margin-right:-2.22px">ー</span><span style="display:inline-block;transform:scaleX(0.780);transform-origin:0 0;letter-spacing:0.93px;margin-right:-10.51px">オフセ</span><span style="display:inline-block;transform:scaleX(0.620);transform-origin:0 0;letter-spacing:1.17px;margin-right:-6.14px">ッ</span><span style="display:inline-block;transform:scaleX(0.780);transform-origin:0 0;letter-spacing:0.93px;margin-right:-3.50px">ト</span><span style="letter-spacing:1.80px">Y</span></div>
<div style="position:absolute;left:1437px;top:528.08px;font-size:15px;line-height:15px;color:#222;white-space:nowrap;"><span style="letter-spacing:1.08px">52</span></div>
<svg style="left:1567.6px;top:525.6px" width="18" height="18" viewBox="0 0 18 18"><circle cx="9" cy="9" r="8.3" fill="#a0a0a0"/><path d="M5.3 7.9L9 3.8L12.7 7.9Z" fill="#f5f0d4"/><path d="M5.3 9.8L9 13.8L12.7 9.8Z" fill="#f5f0d4"/></svg>
<div style="position:absolute;left:1128px;top:549px;width:461px;height:28px;background:#f5f0d4;"></div>
<div style="position:absolute;left:1433px;top:549px;width:156px;height:28px;background:#f5f0d4;"></div>
<div style="position:absolute;left:1128px;top:549px;width:461px;height:1px;background:#a4a4a4;"></div>
<div style="position:absolute;left:1133px;top:556.7px;font-size:15px;line-height:15px;color:#222;white-space:nowrap;"><span style="display:inline-block;transform:scaleX(0.780);transform-origin:0 0;letter-spacing:1.09px;margin-right:-10.62px">スクロ</span><span style="display:inline-block;transform:scaleX(0.860);transform-origin:0 0;letter-spacing:0.99px;margin-right:-2.24px">ー</span><span style="display:inline-block;transform:scaleX(0.780);transform-origin:0 0;letter-spacing:1.09px;margin-right:-7.08px">ルバ</span><span style="display:inline-block;transform:scaleX(0.860);transform-origin:0 0;letter-spacing:0.99px;margin-right:-2.24px">ー</span><span style="letter-spacing:0.85px">横幅</span></div>
<div style="position:absolute;left:1437px;top:556.7px;font-size:15px;line-height:15px;color:#222;white-space:nowrap;"><span style="letter-spacing:1.08px">14</span></div>
<svg style="left:1567.6px;top:554.2px" width="18" height="18" viewBox="0 0 18 18"><circle cx="9" cy="9" r="8.3" fill="#a0a0a0"/><path d="M5.3 7.9L9 3.8L12.7 7.9Z" fill="#f5f0d4"/><path d="M5.3 9.8L9 13.8L12.7 9.8Z" fill="#f5f0d4"/></svg>
<div style="position:absolute;left:1128px;top:577px;width:461px;height:29px;background:#f5f0d4;"></div>
<div style="position:absolute;left:1433px;top:577px;width:156px;height:29px;background:#f5f0d4;"></div>
<div style="position:absolute;left:1128px;top:577px;width:461px;height:1px;background:#a4a4a4;"></div>
<div style="position:absolute;left:1133px;top:585.32px;font-size:15px;line-height:15px;color:#222;white-space:nowrap;"><span style="display:inline-block;transform:scaleX(0.780);transform-origin:0 0;letter-spacing:1.09px;margin-right:-10.62px">スクロ</span><span style="display:inline-block;transform:scaleX(0.860);transform-origin:0 0;letter-spacing:0.99px;margin-right:-2.24px">ー</span><span style="display:inline-block;transform:scaleX(0.780);transform-origin:0 0;letter-spacing:1.09px;margin-right:-7.08px">ルバ</span><span style="display:inline-block;transform:scaleX(0.860);transform-origin:0 0;letter-spacing:0.99px;margin-right:-2.24px">ー</span><span style="letter-spacing:0.85px">縦幅</span></div>
<div style="position:absolute;left:1437px;top:585.32px;font-size:15px;line-height:15px;color:#222;white-space:nowrap;"><span style="letter-spacing:1.08px">426</span></div>
<svg style="left:1567.6px;top:582.8px" width="18" height="18" viewBox="0 0 18 18"><circle cx="9" cy="9" r="8.3" fill="#a0a0a0"/><path d="M5.3 7.9L9 3.8L12.7 7.9Z" fill="#f5f0d4"/><path d="M5.3 9.8L9 13.8L12.7 9.8Z" fill="#f5f0d4"/></svg>
<div style="position:absolute;left:1128px;top:606px;width:461px;height:29px;background:#f5f0d4;"></div>
<div style="position:absolute;left:1433px;top:606px;width:156px;height:29px;background:#f5f0d4;"></div>
<div style="position:absolute;left:1128px;top:606px;width:461px;height:1px;background:#a4a4a4;"></div>
<div style="position:absolute;left:1133px;top:613.94px;font-size:15px;line-height:15px;color:#222;white-space:nowrap;"><span style="display:inline-block;transform:scaleX(0.780);transform-origin:0 0;letter-spacing:0.99px;margin-right:-10.55px">スクロ</span><span style="display:inline-block;transform:scaleX(0.860);transform-origin:0 0;letter-spacing:0.89px;margin-right:-2.23px">ー</span><span style="display:inline-block;transform:scaleX(0.780);transform-origin:0 0;letter-spacing:0.99px;margin-right:-3.52px">ル</span><span style="letter-spacing:0.77px">範囲</span><span style="display:inline-block;transform:scaleX(0.780);transform-origin:0 0;letter-spacing:0.99px;margin-right:-10.55px">オフセ</span><span style="display:inline-block;transform:scaleX(0.620);transform-origin:0 0;letter-spacing:1.24px;margin-right:-6.17px">ッ</span><span style="display:inline-block;transform:scaleX(0.780);transform-origin:0 0;letter-spacing:0.99px;margin-right:-3.52px">ト</span><span style="letter-spacing:1.85px">X</span></div>
<div style="position:absolute;left:1437px;top:613.94px;font-size:15px;line-height:15px;color:#222;white-space:nowrap;"><span style="letter-spacing:1.08px">4</span></div>
<svg style="left:1567.6px;top:611.4px" width="18" height="18" viewBox="0 0 18 18"><circle cx="9" cy="9" r="8.3" fill="#a0a0a0"/><path d="M5.3 7.9L9 3.8L12.7 7.9Z" fill="#f5f0d4"/><path d="M5.3 9.8L9 13.8L12.7 9.8Z" fill="#f5f0d4"/></svg>
<div style="position:absolute;left:1128px;top:635px;width:461px;height:28px;background:#f5f0d4;"></div>
<div style="position:absolute;left:1433px;top:635px;width:156px;height:28px;background:#f5f0d4;"></div>
<div style="position:absolute;left:1128px;top:635px;width:461px;height:1px;background:#a4a4a4;"></div>
<div style="position:absolute;left:1133px;top:642.5600000000001px;font-size:15px;line-height:15px;color:#222;white-space:nowrap;"><span style="display:inline-block;transform:scaleX(0.780);transform-origin:0 0;letter-spacing:0.99px;margin-right:-10.55px">スクロ</span><span style="display:inline-block;transform:scaleX(0.860);transform-origin:0 0;letter-spacing:0.89px;margin-right:-2.23px">ー</span><span style="display:inline-block;transform:scaleX(0.780);transform-origin:0 0;letter-spacing:0.99px;margin-right:-3.52px">ル</span><span style="letter-spacing:0.77px">範囲</span><span style="display:inline-block;transform:scaleX(0.780);transform-origin:0 0;letter-spacing:0.99px;margin-right:-10.55px">オフセ</span><span style="display:inline-block;transform:scaleX(0.620);transform-origin:0 0;letter-spacing:1.24px;margin-right:-6.17px">ッ</span><span style="display:inline-block;transform:scaleX(0.780);transform-origin:0 0;letter-spacing:0.99px;margin-right:-3.52px">ト</span><span style="letter-spacing:1.85px">Y</span></div>
<div style="position:absolute;left:1437px;top:642.5600000000001px;font-size:15px;line-height:15px;color:#222;white-space:nowrap;"><span style="letter-spacing:1.08px">44</span></div>
<svg style="left:1567.6px;top:640.1px" width="18" height="18" viewBox="0 0 18 18"><circle cx="9" cy="9" r="8.3" fill="#a0a0a0"/><path d="M5.3 7.9L9 3.8L12.7 7.9Z" fill="#f5f0d4"/><path d="M5.3 9.8L9 13.8L12.7 9.8Z" fill="#f5f0d4"/></svg>
<div style="position:absolute;left:1128px;top:663px;width:461px;height:29px;background:#f5f0d4;"></div>
<div style="position:absolute;left:1433px;top:663px;width:156px;height:29px;background:#aaaaaa;"></div>
<div style="position:absolute;left:1128px;top:663px;width:461px;height:1px;background:#a4a4a4;"></div>
<div style="position:absolute;left:1133px;top:671.1800000000001px;font-size:15px;line-height:15px;color:#222;white-space:nowrap;"><span style="display:inline-block;transform:scaleX(0.780);transform-origin:0 0;letter-spacing:1.03px;margin-right:-10.58px">スクロ</span><span style="display:inline-block;transform:scaleX(0.860);transform-origin:0 0;letter-spacing:0.94px;margin-right:-2.23px">ー</span><span style="display:inline-block;transform:scaleX(0.780);transform-origin:0 0;letter-spacing:1.03px;margin-right:-3.53px">ル</span><span style="letter-spacing:0.81px">範囲横幅</span></div>
<div style="position:absolute;left:1437px;top:671.1800000000001px;font-size:15px;line-height:15px;color:#f4f4f4;white-space:nowrap;"><span style="letter-spacing:1.08px">442</span></div>
<svg style="left:1567.6px;top:668.7px" width="18" height="18" viewBox="0 0 18 18"><circle cx="9" cy="9" r="8.3" fill="#a6a6a6"/><path d="M5.3 7.9L9 3.8L12.7 7.9Z" fill="#b2b2b2"/><path d="M5.3 9.8L9 13.8L12.7 9.8Z" fill="#b2b2b2"/></svg>
<div style="position:absolute;left:1128px;top:692px;width:461px;height:28px;background:#f5f0d4;"></div>
<div style="position:absolute;left:1433px;top:692px;width:156px;height:28px;background:#f5f0d4;"></div>
<div style="position:absolute;left:1128px;top:692px;width:461px;height:1px;background:#a4a4a4;"></div>
<div style="position:absolute;left:1133px;top:699.8px;font-size:15px;line-height:15px;color:#222;white-space:nowrap;"><span style="display:inline-block;transform:scaleX(0.780);transform-origin:0 0;letter-spacing:1.03px;margin-right:-10.58px">スクロ</span><span style="display:inline-block;transform:scaleX(0.860);transform-origin:0 0;letter-spacing:0.94px;margin-right:-2.23px">ー</span><span style="display:inline-block;transform:scaleX(0.780);transform-origin:0 0;letter-spacing:1.03px;margin-right:-3.53px">ル</span><span style="letter-spacing:0.81px">範囲縦幅</span></div>
<div style="position:absolute;left:1437px;top:699.8px;font-size:15px;line-height:15px;color:#222;white-space:nowrap;"><span style="letter-spacing:1.08px">440</span></div>
<svg style="left:1567.6px;top:697.3px" width="18" height="18" viewBox="0 0 18 18"><circle cx="9" cy="9" r="8.3" fill="#a0a0a0"/><path d="M5.3 7.9L9 3.8L12.7 7.9Z" fill="#f5f0d4"/><path d="M5.3 9.8L9 13.8L12.7 9.8Z" fill="#f5f0d4"/></svg>
<div style="position:absolute;left:1128px;top:720px;width:461px;height:29px;background:#f5f0d4;"></div>
<div style="position:absolute;left:1433px;top:720px;width:156px;height:29px;background:#f5f0d4;"></div>
<div style="position:absolute;left:1128px;top:720px;width:461px;height:1px;background:#a4a4a4;"></div>
<div style="position:absolute;left:1133px;top:728.4200000000001px;font-size:15px;line-height:15px;color:#222;white-space:nowrap;"><span style="display:inline-block;transform:scaleX(0.780);transform-origin:0 0;letter-spacing:0.79px;margin-right:-10.42px">スクロ</span><span style="display:inline-block;transform:scaleX(0.860);transform-origin:0 0;letter-spacing:0.72px;margin-right:-2.20px">ー</span><span style="display:inline-block;transform:scaleX(0.780);transform-origin:0 0;letter-spacing:0.79px;margin-right:-6.95px">ルバ</span><span style="display:inline-block;transform:scaleX(0.860);transform-origin:0 0;letter-spacing:0.72px;margin-right:-2.20px">ー</span><span style="display:inline-block;transform:scaleX(0.880);transform-origin:0 0;letter-spacing:0.70px;margin-right:-1.88px">の</span><span style="letter-spacing:0.62px">向</span><span style="display:inline-block;transform:scaleX(0.880);transform-origin:0 0;letter-spacing:0.70px;margin-right:-1.88px">き</span></div>
<div style="position:absolute;left:1437px;top:728.4200000000001px;font-size:15px;line-height:15px;color:#222;white-space:nowrap;"><span style="letter-spacing:0.50px">上下</span></div>
<svg style="left:1567px;top:721.4px" width="20" height="20" viewBox="0 0 20 20"><rect x="0" y="0" width="19" height="19" rx="2" fill="#a0a0a0"/><path d="M3 3H16L9.5 10Z" fill="#f5f0d4"/></svg>
<div style="position:absolute;left:1128px;top:749px;width:461px;height:29px;background:#f5f0d4;"></div>
<div style="position:absolute;left:1433px;top:749px;width:156px;height:29px;background:#f5f0d4;"></div>
<div style="position:absolute;left:1128px;top:749px;width:461px;height:1px;background:#a4a4a4;"></div>
<div style="position:absolute;left:1133px;top:757.04px;font-size:15px;line-height:15px;color:#222;white-space:nowrap;"><span style="letter-spacing:1.25px">背景画像</span></div>
<div style="position:absolute;left:1437px;top:757.04px;font-size:15px;line-height:15px;color:#222;white-space:nowrap;"><span style="letter-spacing:0.48px">矩形</span><span style="display:inline-block;transform:scaleX(0.880);transform-origin:0 0;letter-spacing:0.54px;margin-right:-1.86px">を</span><span style="letter-spacing:0.48px">表示</span><span style="display:inline-block;transform:scaleX(0.880);transform-origin:0 0;letter-spacing:0.54px;margin-right:-3.73px">する</span></div>
<svg style="left:1567px;top:754.5px" width="18" height="18" viewBox="0 0 18 18"><path d="M2 9H15M9.5 3L15.5 9L9.5 15" fill="none" stroke="#9a9a9a" stroke-width="2.2"/></svg>
<div style="position:absolute;left:1128px;top:778px;width:461px;height:28px;background:#f5f0d4;"></div>
<div style="position:absolute;left:1433px;top:778px;width:156px;height:28px;background:#575757;"></div>
<div style="position:absolute;left:1128px;top:778px;width:461px;height:1px;background:#a4a4a4;"></div>
<div style="position:absolute;left:1133px;top:785.6600000000001px;font-size:15px;line-height:15px;color:#222;white-space:nowrap;"><span style="letter-spacing:1.00px">背景画像色</span></div>
<div style="position:absolute;left:1437px;top:785.6600000000001px;font-size:15px;line-height:15px;color:#f0f0f0;white-space:nowrap;"><span style="letter-spacing:1.45px">575757A0</span></div>
<svg style="left:1567px;top:783.2px" width="18" height="18" viewBox="0 0 18 18"><path d="M2 9H15M9.5 3L15.5 9L9.5 15" fill="none" stroke="#9a9a9a" stroke-width="2.2"/></svg>
<div style="position:absolute;left:1128px;top:806px;width:461px;height:29px;background:#f5f0d4;"></div>
<div style="position:absolute;left:1433px;top:806px;width:156px;height:29px;background:#f5f0d4;"></div>
<div style="position:absolute;left:1128px;top:806px;width:461px;height:1px;background:#a4a4a4;"></div>
<div style="position:absolute;left:1133px;top:814.28px;font-size:15px;line-height:15px;color:#222;white-space:nowrap;"><span style="letter-spacing:0.39px">枠</span><span style="display:inline-block;transform:scaleX(0.880);transform-origin:0 0;letter-spacing:0.44px;margin-right:-1.85px">の</span><span style="letter-spacing:0.39px">太</span><span style="display:inline-block;transform:scaleX(0.880);transform-origin:0 0;letter-spacing:0.44px;margin-right:-1.85px">さ</span></div>
<div style="position:absolute;left:1437px;top:814.28px;font-size:15px;line-height:15px;color:#222;white-space:nowrap;"><span style="letter-spacing:1.08px">-2</span></div>
<svg style="left:1567.6px;top:811.8px" width="18" height="18" viewBox="0 0 18 18"><circle cx="9" cy="9" r="8.3" fill="#a0a0a0"/><path d="M5.3 7.9L9 3.8L12.7 7.9Z" fill="#f5f0d4"/><path d="M5.3 9.8L9 13.8L12.7 9.8Z" fill="#f5f0d4"/></svg>
<div style="position:absolute;left:1128px;top:835px;width:461px;height:29px;background:#f5f0d4;"></div>
<div style="position:absolute;left:1433px;top:835px;width:156px;height:29px;background:#868686;"></div>
<div style="position:absolute;left:1128px;top:835px;width:461px;height:1px;background:#a4a4a4;"></div>
<div style="position:absolute;left:1133px;top:842.9000000000001px;font-size:15px;line-height:15px;color:#222;white-space:nowrap;"><span style="letter-spacing:0.95px">矩形使用時</span><span style="display:inline-block;transform:scaleX(0.880);transform-origin:0 0;letter-spacing:1.09px;margin-right:-1.93px">の</span><span style="letter-spacing:0.95px">枠</span><span style="display:inline-block;transform:scaleX(0.880);transform-origin:0 0;letter-spacing:1.09px;margin-right:-1.93px">の</span><span style="letter-spacing:0.95px">色</span></div>
<div style="position:absolute;left:1437px;top:842.9000000000001px;font-size:15px;line-height:15px;color:#1c1c1c;white-space:nowrap;"><span style="letter-spacing:1.45px">808080A0</span></div>
<svg style="left:1567px;top:840.4px" width="18" height="18" viewBox="0 0 18 18"><path d="M2 9H15M9.5 3L15.5 9L9.5 15" fill="none" stroke="#9a9a9a" stroke-width="2.2"/></svg>
<div style="position:absolute;left:1128px;top:864px;width:461px;height:28px;background:#f5f0d4;"></div>
<div style="position:absolute;left:1433px;top:864px;width:156px;height:28px;background:#f5f0d4;"></div>
<div style="position:absolute;left:1128px;top:864px;width:461px;height:1px;background:#a4a4a4;"></div>
<div style="position:absolute;left:1133px;top:871.52px;font-size:15px;line-height:15px;color:#222;white-space:nowrap;"><span style="display:inline-block;transform:scaleX(0.780);transform-origin:0 0;letter-spacing:1.94px;margin-right:-7.45px">サム</span><span style="letter-spacing:1.51px">用画像</span></div>
<div style="position:absolute;left:1437px;top:871.52px;font-size:15px;line-height:15px;color:#222;white-space:nowrap;"><span style="letter-spacing:0.48px">矩形</span><span style="display:inline-block;transform:scaleX(0.880);transform-origin:0 0;letter-spacing:0.54px;margin-right:-1.86px">を</span><span style="letter-spacing:0.48px">表示</span><span style="display:inline-block;transform:scaleX(0.880);transform-origin:0 0;letter-spacing:0.54px;margin-right:-3.73px">する</span></div>
<svg style="left:1567px;top:869.0px" width="18" height="18" viewBox="0 0 18 18"><path d="M2 9H15M9.5 3L15.5 9L9.5 15" fill="none" stroke="#9a9a9a" stroke-width="2.2"/></svg>
<div style="position:absolute;left:1128px;top:892px;width:461px;height:29px;background:#f5f0d4;"></div>
<div style="position:absolute;left:1433px;top:892px;width:156px;height:29px;background:#c4c4c4;"></div>
<div style="position:absolute;left:1128px;top:892px;width:461px;height:1px;background:#a4a4a4;"></div>
<div style="position:absolute;left:1133px;top:900.1400000000001px;font-size:15px;line-height:15px;color:#222;white-space:nowrap;"><span style="display:inline-block;transform:scaleX(0.780);transform-origin:0 0;letter-spacing:1.94px;margin-right:-7.45px">サム</span><span style="letter-spacing:1.51px">表示色</span></div>
<div style="position:absolute;left:1437px;top:900.1400000000001px;font-size:15px;line-height:15px;color:#1c1c1c;white-space:nowrap;"><span style="letter-spacing:0.71px">C0C0C0FF</span></div>
<svg style="left:1567px;top:897.6px" width="18" height="18" viewBox="0 0 18 18"><path d="M2 9H15M9.5 3L15.5 9L9.5 15" fill="none" stroke="#9a9a9a" stroke-width="2.2"/></svg>
<div style="position:absolute;left:1128px;top:921px;width:461px;height:28px;background:#f5f0d4;"></div>
<div style="position:absolute;left:1433px;top:921px;width:156px;height:28px;background:#f5f0d4;"></div>
<div style="position:absolute;left:1128px;top:921px;width:461px;height:1px;background:#a4a4a4;"></div>
<div style="position:absolute;left:1133px;top:928.76px;font-size:15px;line-height:15px;color:#222;white-space:nowrap;"><span style="display:inline-block;transform:scaleX(0.780);transform-origin:0 0;letter-spacing:1.64px;margin-right:-7.32px">サム</span><span style="display:inline-block;transform:scaleX(0.880);transform-origin:0 0;letter-spacing:1.46px;margin-right:-1.97px">の</span><span style="display:inline-block;transform:scaleX(0.780);transform-origin:0 0;letter-spacing:1.64px;margin-right:-10.98px">サイズ</span><span style="letter-spacing:1.28px">調整</span></div>
<svg style="left:1438px;top:925.3px" width="40" height="20" viewBox="0 0 40 20"><rect x="0.5" y="0.5" width="39" height="19" rx="9.5" fill="#6a6a6a"/><circle cx="30.5" cy="10" r="8" fill="#fff"/><rect x="29.5" y="5.5" width="2.2" height="9" fill="#333"/></svg>
<div style="position:absolute;left:1128px;top:949px;width:461px;height:29px;background:#f5f0d4;"></div>
<div style="position:absolute;left:1433px;top:949px;width:156px;height:29px;background:#f5f0d4;"></div>
<div style="position:absolute;left:1128px;top:949px;width:461px;height:1px;background:#a4a4a4;"></div>
<div style="position:absolute;left:1133px;top:957.38px;font-size:15px;line-height:15px;color:#222;white-space:nowrap;"><span style="display:inline-block;transform:scaleX(0.780);transform-origin:0 0;letter-spacing:1.48px;margin-right:-7.25px">サム</span><span style="display:inline-block;transform:scaleX(0.880);transform-origin:0 0;letter-spacing:1.32px;margin-right:-1.96px">の</span><span style="letter-spacing:1.16px">最低</span><span style="display:inline-block;transform:scaleX(0.780);transform-origin:0 0;letter-spacing:1.48px;margin-right:-10.88px">サイズ</span></div>
<div style="position:absolute;left:1437px;top:957.38px;font-size:15px;line-height:15px;color:#222;white-space:nowrap;"><span style="letter-spacing:1.08px">20</span></div>
<svg style="left:1567.6px;top:954.9px" width="18" height="18" viewBox="0 0 18 18"><circle cx="9" cy="9" r="8.3" fill="#a0a0a0"/><path d="M5.3 7.9L9 3.8L12.7 7.9Z" fill="#f5f0d4"/><path d="M5.3 9.8L9 13.8L12.7 9.8Z" fill="#f5f0d4"/></svg>
<div style="position:absolute;left:1128px;top:978px;width:461px;height:29px;background:#e8e8e8;"></div>
<div style="position:absolute;left:1433px;top:978px;width:156px;height:29px;background:#e8e8e8;"></div>
<div style="position:absolute;left:1128px;top:978px;width:461px;height:1px;background:#a4a4a4;"></div>
<div style="position:absolute;left:1133px;top:986.0px;font-size:15px;line-height:15px;color:#a8a8a8;white-space:nowrap;"><span style="display:inline-block;transform:scaleX(0.780);transform-origin:0 0;letter-spacing:1.55px;margin-right:-7.28px">サム</span><span style="display:inline-block;transform:scaleX(0.880);transform-origin:0 0;letter-spacing:1.38px;margin-right:-1.97px">の</span><span style="letter-spacing:1.21px">移動範囲</span><span style="display:inline-block;transform:scaleX(0.880);transform-origin:0 0;letter-spacing:1.38px;margin-right:-1.97px">の</span><span style="letter-spacing:1.21px">余白</span></div>
<div style="position:absolute;left:1437px;top:986.0px;font-size:15px;line-height:15px;color:#a8a8a8;white-space:nowrap;"><span style="letter-spacing:1.08px">0</span></div>
<div style="position:absolute;left:1128px;top:1007px;width:461px;height:1px;background:#a4a4a4;"></div>
<div style="position:absolute;left:1432px;top:406px;width:1px;height:601px;background:#a0a0a0;"></div>
<div style="position:absolute;left:1128px;top:406px;width:1px;height:601px;background:#a8a8a8;"></div>
<div style="position:absolute;left:1588px;top:406px;width:1px;height:601px;background:#a8a8a8;"></div>
<div style="position:absolute;left:5px;top:1030px;width:1584px;height:45px;background:#6b6b6b;"></div>
<div style="position:absolute;left:8px;top:1044px;font-size:15px;line-height:15px;color:#f2f2f2;white-space:nowrap;"><span style="display:inline-block;transform:scaleX(0.780);transform-origin:0 0;letter-spacing:0.85px;margin-right:-3.49px">ゲ</span><span style="display:inline-block;transform:scaleX(0.860);transform-origin:0 0;letter-spacing:0.77px;margin-right:-2.21px">ー</span><span style="display:inline-block;transform:scaleX(0.780);transform-origin:0 0;letter-spacing:0.85px;margin-right:-3.49px">ム</span><span style="letter-spacing:0.66px">中</span><span style="display:inline-block;transform:scaleX(0.880);transform-origin:0 0;letter-spacing:0.75px;margin-right:-1.89px">の</span><span style="display:inline-block;transform:scaleX(0.780);transform-origin:0 0;letter-spacing:0.85px;margin-right:-6.97px">メニ</span><span style="display:inline-block;transform:scaleX(0.620);transform-origin:0 0;letter-spacing:1.06px;margin-right:-6.10px">ュ</span><span style="display:inline-block;transform:scaleX(0.860);transform-origin:0 0;letter-spacing:0.77px;margin-right:-2.21px">ー</span><span style="letter-spacing:0.66px">構成</span><span style="display:inline-block;transform:scaleX(0.880);transform-origin:0 0;letter-spacing:0.75px;margin-right:-1.89px">や</span><span style="letter-spacing:0.66px">各種</span><span style="display:inline-block;transform:scaleX(0.780);transform-origin:0 0;letter-spacing:0.85px;margin-right:-3.49px">ウ</span><span style="display:inline-block;transform:scaleX(0.620);transform-origin:0 0;letter-spacing:1.06px;margin-right:-6.10px">ィ</span><span style="display:inline-block;transform:scaleX(0.780);transform-origin:0 0;letter-spacing:0.85px;margin-right:-10.46px">ンドウ</span><span style="display:inline-block;transform:scaleX(0.880);transform-origin:0 0;letter-spacing:0.75px;margin-right:-1.89px">の</span><span style="display:inline-block;transform:scaleX(0.780);transform-origin:0 0;letter-spacing:0.85px;margin-right:-13.94px">デザイン</span><span style="display:inline-block;transform:scaleX(0.880);transform-origin:0 0;letter-spacing:0.75px;margin-right:-1.89px">や</span><span style="letter-spacing:0.66px">表示位置</span><span style="letter-spacing:-5.34px">、</span><span style="display:inline-block;transform:scaleX(0.780);transform-origin:0 0;letter-spacing:0.85px;margin-right:-17.43px">スプライト</span><span style="display:inline-block;transform:scaleX(0.880);transform-origin:0 0;letter-spacing:0.75px;margin-right:-1.89px">を</span><span style="letter-spacing:0.66px">使用</span><span style="display:inline-block;transform:scaleX(0.880);transform-origin:0 0;letter-spacing:0.75px;margin-right:-3.78px">した</span><span style="display:inline-block;transform:scaleX(0.780);transform-origin:0 0;letter-spacing:0.85px;margin-right:-3.49px">カ</span><span style="display:inline-block;transform:scaleX(0.860);transform-origin:0 0;letter-spacing:0.77px;margin-right:-2.21px">ー</span><span style="display:inline-block;transform:scaleX(0.780);transform-origin:0 0;letter-spacing:0.85px;margin-right:-20.92px">ソルデザイン</span><span style="display:inline-block;transform:scaleX(0.880);transform-origin:0 0;letter-spacing:0.75px;margin-right:-1.89px">の</span><span style="letter-spacing:0.66px">変更</span><span style="display:inline-block;transform:scaleX(0.880);transform-origin:0 0;letter-spacing:0.75px;margin-right:-5.67px">などを</span><span style="display:inline-block;transform:scaleX(0.780);transform-origin:0 0;letter-spacing:0.85px;margin-right:-20.92px">カスタマイズ</span><span style="display:inline-block;transform:scaleX(0.880);transform-origin:0 0;letter-spacing:0.75px;margin-right:-17.01px">することができます</span><span style="letter-spacing:-5.34px">。</span></div>
<div style="position:absolute;left:1217px;top:1037px;width:114px;height:30px;background:#b6b6b6;border-radius:5px;"></div>
<div style="position:absolute;left:1336px;top:1037px;width:115px;height:30px;background:#b6b6b6;border-radius:5px;"></div>
<div style="position:absolute;left:1456px;top:1037px;width:126px;height:30px;background:#b6b6b6;border-radius:5px;"></div>
<svg style="left:1223px;top:1041px" width="26" height="26" viewBox="0 0 26 26"><path d="M1.3 14V1.3H15.2L20.8 7V12.5" fill="none" stroke="#5e5e5e" stroke-width="2.5"/><path d="M1.3 13V21.7H11.5" fill="none" stroke="#5e5e5e" stroke-width="2.5"/><path d="M15 1.3V7.2H20.8Z" fill="#5e5e5e"/><rect x="4.8" y="5.4" width="2.3" height="2.3" fill="#5e5e5e"/><rect x="9.8" y="5.4" width="2.3" height="2.3" fill="#5e5e5e"/><rect x="4.8" y="9.2" width="2.3" height="2.3" fill="#5e5e5e"/><rect x="4.8" y="13" width="2.3" height="2.3" fill="#5e5e5e"/><path d="M10.5 12.8L16 12L23.8 19.8L19.3 24.3L11.4 16.4Z" fill="#5e5e5e"/><circle cx="14" cy="15" r="1" fill="#b6b6b6"/></svg>
<div style="position:absolute;left:1254px;top:1045px;font-size:15px;line-height:15px;color:#1c1c1c;white-space:nowrap;"><span style="letter-spacing:-0.50px">適用</span></div>
<div style="position:absolute;left:1342px;top:1041px;width:23px;height:23px;background:#5b8de0;border-radius:2px;"></div>
<svg style="left:1345px;top:1044px" width="17" height="17" viewBox="0 0 17 17"><path d="M2.5 8.5L6.5 12.5L14.5 4" fill="none" stroke="#fff" stroke-width="2.8"/></svg>
<div style="position:absolute;left:1374px;top:1045px;font-size:15px;line-height:15px;color:#1c1c1c;white-space:nowrap;"><span style="letter-spacing:0.16px">OK</span></div>
<div style="position:absolute;left:1462px;top:1041px;width:23px;height:23px;background:#e06082;border-radius:2px;"></div>
<svg style="left:1465px;top:1044px" width="17" height="17" viewBox="0 0 17 17"><path d="M3 3L14 14M14 3L3 14" fill="none" stroke="#fff" stroke-width="2.6"/></svg>
<div style="position:absolute;left:1493px;top:1045px;font-size:15px;line-height:15px;color:#1c1c1c;white-space:nowrap;"><span style="display:inline-block;transform:scaleX(0.780);transform-origin:0 0;letter-spacing:0.48px;margin-right:-3.41px">キ</span><span style="display:inline-block;transform:scaleX(0.620);transform-origin:0 0;letter-spacing:0.60px;margin-right:-5.93px">ャ</span><span style="display:inline-block;transform:scaleX(0.780);transform-origin:0 0;letter-spacing:0.48px;margin-right:-10.22px">ンセル</span></div>
<svg style="left:1574px;top:1060px" width="18" height="18" viewBox="0 0 18 18"><path d="M17 4L4 17M17 9L9 17M17 14L14 17" stroke="#333" stroke-width="1.6"/></svg>
<div style="position:absolute;left:582px;top:298px;width:496px;height:73px;border:5px solid #e83200;"></div>
<div style="position:absolute;left:582px;top:366px;width:496px;height:485px;border:5px solid #e83200;"></div>
<div style="position:absolute;left:237px;top:466px;width:301px;height:72px;border:5px solid #e83200;"></div>
<div style="position:absolute;left:237px;top:534px;width:301px;height:134px;border:5px solid #e83200;"></div>
<div style="position:absolute;left:1121px;top:221px;width:473px;height:73px;border:5px solid #e83200;"></div>
<div style="position:absolute;left:1121px;top:456px;width:473px;height:42px;border:5px solid #e83200;"></div>
<div style="position:absolute;left:1121px;top:599px;width:473px;height:128px;border:5px solid #e83200;"></div>
<svg style="left:0;top:0" width="1594" height="1080" viewBox="0 0 1594 1080"><path d="M449 468L585 334" stroke="#ff0000" stroke-width="6"/><path d="M536 553L1122 476" stroke="#ff0000" stroke-width="6"/><path d="M1076 667.5H1122" stroke="#ff0000" stroke-width="5"/></svg>
<div style="position:absolute;left:1500px;top:167px;width:79px;height:78px;background:#eefc18;border:3px solid #0c1e2c;"></div>
<svg style="left:1514px;top:180px" width="50" height="50" viewBox="0 0 50 50"><circle cx="24.8" cy="25" r="22.2" fill="none" stroke="#000" stroke-width="2.3"/></svg>
<div style="position:absolute;left:1499.5px;top:186px;width:79px;text-align:center;font-size:35px;line-height:40px;font-weight:bold;color:#000;-webkit-text-stroke:1.3px #000;">1</div>
<div style="position:absolute;left:1501px;top:391px;width:79px;height:78px;background:#eefc18;border:3px solid #0c1e2c;"></div>
<svg style="left:1515px;top:404px" width="50" height="50" viewBox="0 0 50 50"><circle cx="24.8" cy="25" r="22.2" fill="none" stroke="#000" stroke-width="2.3"/></svg>
<div style="position:absolute;left:1500.5px;top:410px;width:79px;text-align:center;font-size:35px;line-height:40px;font-weight:bold;color:#000;-webkit-text-stroke:1.3px #000;">5</div>
<div style="position:absolute;left:1501px;top:546px;width:79px;height:78px;background:#eefc18;border:3px solid #0c1e2c;"></div>
<svg style="left:1515px;top:559px" width="50" height="50" viewBox="0 0 50 50"><circle cx="24.8" cy="25" r="22.2" fill="none" stroke="#000" stroke-width="2.3"/></svg>
<div style="position:absolute;left:1500.5px;top:565px;width:79px;text-align:center;font-size:35px;line-height:40px;font-weight:bold;color:#000;-webkit-text-stroke:1.3px #000;">4</div>
<div style="position:absolute;left:236px;top:395px;width:79px;height:78px;background:#eefc18;border:3px solid #0c1e2c;"></div>
<svg style="left:250px;top:408px" width="50" height="50" viewBox="0 0 50 50"><circle cx="24.8" cy="25" r="22.2" fill="none" stroke="#000" stroke-width="2.3"/></svg>
<div style="position:absolute;left:235.5px;top:414px;width:79px;text-align:center;font-size:35px;line-height:40px;font-weight:bold;color:#000;-webkit-text-stroke:1.3px #000;">3</div>
<div style="position:absolute;left:236px;top:636px;width:79px;height:78px;background:#eefc18;border:3px solid #0c1e2c;"></div>
<svg style="left:250px;top:649px" width="50" height="50" viewBox="0 0 50 50"><circle cx="24.8" cy="25" r="22.2" fill="none" stroke="#000" stroke-width="2.3"/></svg>
<div style="position:absolute;left:235.5px;top:655px;width:79px;text-align:center;font-size:35px;line-height:40px;font-weight:bold;color:#000;-webkit-text-stroke:1.3px #000;">2</div>
</body></html>
